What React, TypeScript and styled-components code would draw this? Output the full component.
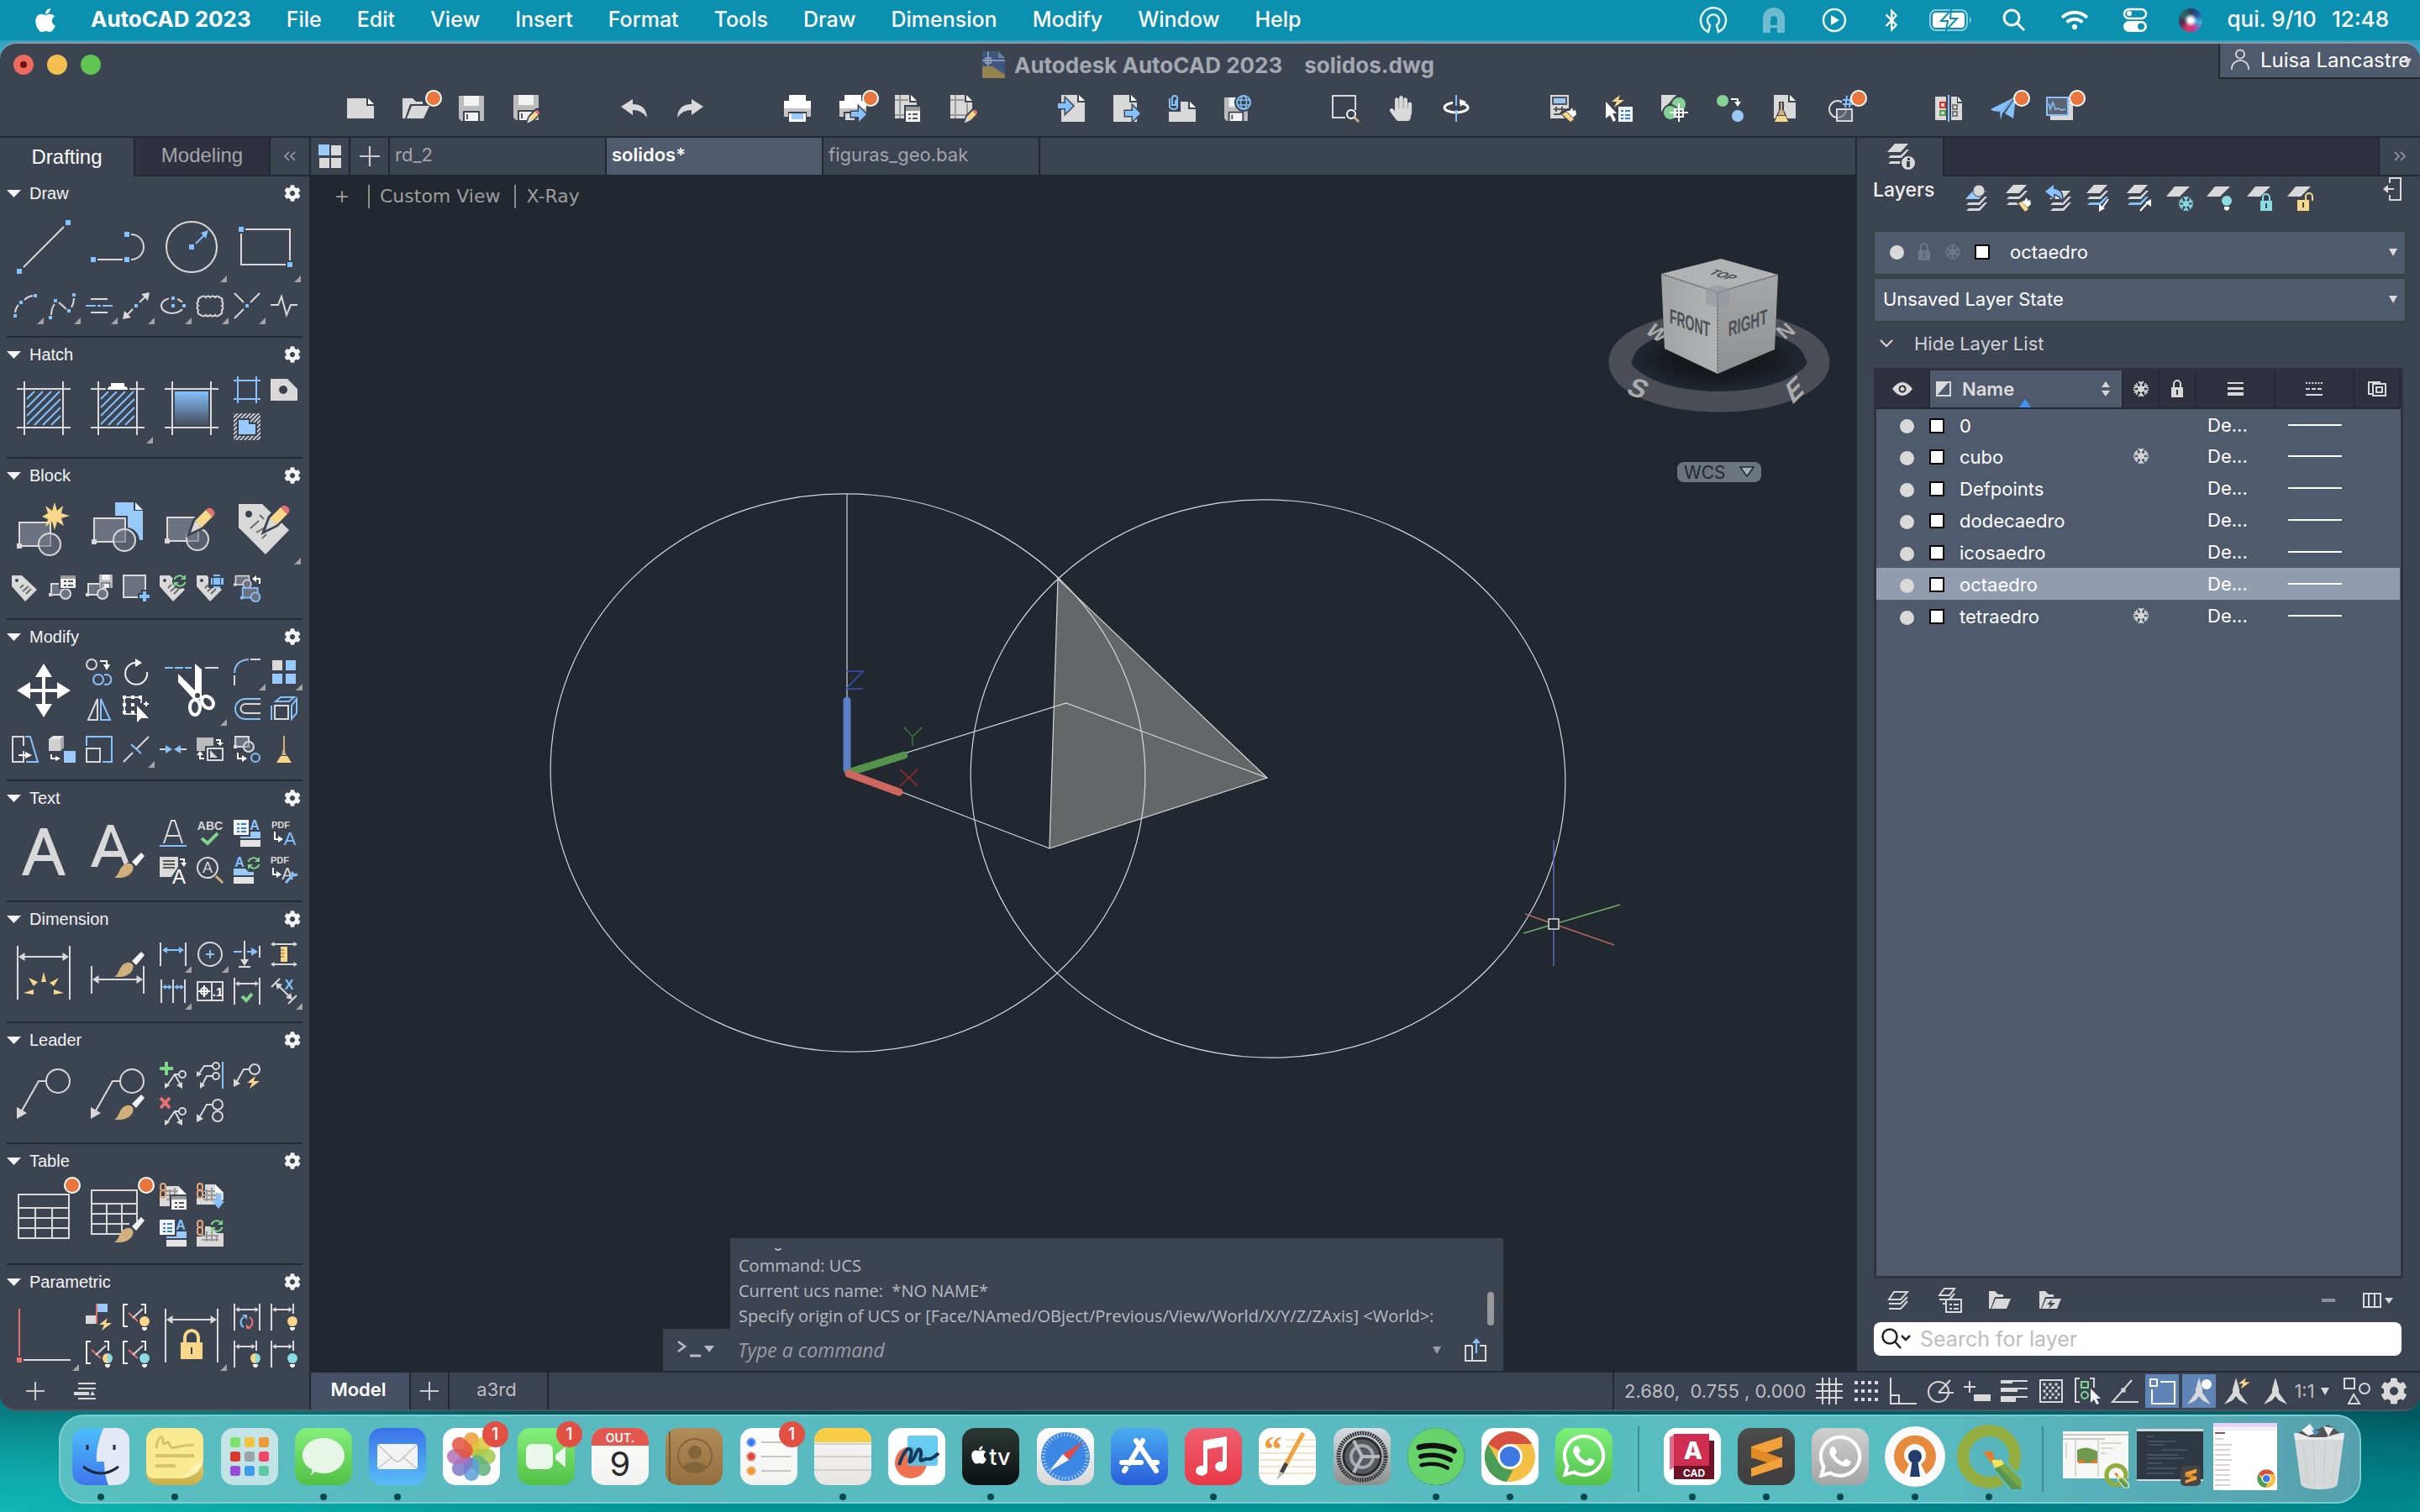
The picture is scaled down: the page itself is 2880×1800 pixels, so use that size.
import React from "react";
import styled, { createGlobalStyle, css } from "styled-components";
import { FaApple, FaSpotify, FaWhatsapp, FaBluetoothB, FaWifi, FaCog, FaHandPaper } from "react-icons/fa";

const W = "#d9d9d9";
const B = "#85c1fb";
const SKY = "#98c9f8";
const Y = "#f8d68a";
const G = "#7fd58b";
const R = "#e57070";
const T = "#8adbe2";
const TAN = "#d2b07c";
const PANEL = "#3c4452";
const FIELD = "#4f5a6d";
const DARK = "#2f323e";
const LINE = "#222831";
const UI = `Inter, "Noto Sans", sans-serif`;
const HELV = `"Liberation Sans", Arial, sans-serif`;
const CMD = `"Open Sans", "Noto Sans", sans-serif`;

const Global = createGlobalStyle`
  * { box-sizing: border-box; }
  body { margin: 0; background: #03868c; }
  button, input, select { font: inherit; color: inherit; border: 0; margin: 0; padding: 0; background: none; }
  svg { display: block; }
`;

/* ---------- drawing helpers ---------- */
type Pt = { c?: string; d: string; w?: number };
const F = ({ c = W, d }: Pt) => <path d={d} fill={c} stroke="none" />;
const L = ({ c = W, d, w = 2 }: Pt) => <path d={d} fill="none" stroke={c} strokeWidth={w} />;
const O = ({ x, y, r, c = W, f = "none", w = 2 }: { x: number; y: number; r: number; c?: string; f?: string; w?: number }) => (
  <circle cx={x} cy={y} r={r} fill={f} stroke={c} strokeWidth={w} />
);
const Sq = ({ x, y, s = 6, c = B }: { x: number; y: number; s?: number; c?: string }) => (
  <rect x={x - s / 2} y={y - s / 2} width={s} height={s} fill={c} />
);
const S = ({ s = 32, children }: { s?: number; children: React.ReactNode }) => (
  <svg width={s} height={s} viewBox={`0 0 ${s} ${s}`} overflow="visible" aria-hidden="true">{children}</svg>
);
const At = ({ x, y, k = 1, children }: { x: number; y: number; k?: number; children: React.ReactNode }) => (
  <g transform={`translate(${x} ${y}) scale(${k})`}>{children}</g>
);
const Brush = () => (
  <>
    <F c={TAN} d="M28 63C35 59 33 49 43 46C49 45 53 50 49 56C44 63 37 63 28 63z" />
    <F c="#f2f2f2" d="M49 44L60 33L64 37L54 49z" />
  </>
);
const Pencil = () => (
  <>
    <path d="M30 37L36 21L50 6A6 6 0 0 1 59 15L44 30z" fill="none" stroke={PANEL} strokeWidth={5} />
    <F c={Y} d="M36 22L49 9L57 17L44 30z" />
    <F d="M36 22L44 30L31 36z" />
    <F c={R} d="M50 8A6 6 0 0 1 59 15L57 17L49 9z" />
  </>
);
const Bulb = ({ x, y, a = Y, b = a }: { x: number; y: number; a?: string; b?: string }) => (
  <>
    <circle cx={x} cy={y} r={8} fill={PANEL} />
    <path d={`M${x} ${y - 6}a6 6 0 0 0 0 12z`} fill={a} />
    <path d={`M${x} ${y - 6}a6 6 0 0 1 0 12z`} fill={b} />
    <path d={`M${x - 3} ${y + 7}h6v2l-2 2h-2l-2 -2z`} fill="#fff" />
  </>
);
const Bolt = ({ x, y, k = 1 }: { x: number; y: number; k?: number }) => (
  <At x={x} y={y} k={k}><F c={Y} d="M10 0L0 8H6L3 15L15 6H8z" /></At>
);
const Cycle = ({ x, y, a = G, b = G }: { x: number; y: number; a?: string; b?: string }) => (
  <At x={x} y={y}>
    <L c={a} d="M1.500 6A6.500 6.500 0 0 1 12 3" /><F c={a} d="M15 0V6H9z" />
    <L c={b} d="M14.500 9A6.500 6.500 0 0 1 4 12" /><F c={b} d="M1 15V9H7z" />
  </At>
);
const Doc = ({ x, y, w, h, c = W }: { x: number; y: number; w: number; h: number; c?: string }) => (
  <>
    <F c={c} d={`M${x} ${y}h${w - 9}v9h9v${h - 9}h${-w}z`} />
    <F c="#fff" d={`M${x + w - 7} ${y}l7 7h-7z`} />
  </>
);
const Floppy = () => (
  <>
    <F c="#bcbcbc" d="M0 0H30V30H3L0 27z" />
    <F c="#f2f2f2" d="M6 0H24V12H6z" />
    <F c={PANEL} d="M5 18H25V30H5z" />
    <F c="#f2f2f2" d="M7 20H23V30H7z" /><F c="#555" d="M9 22h2v6h-2z" />
  </>
);
const Snow = ({ s = 20, c = W }: { s?: number; c?: string }) => (
  <svg width={s} height={s} viewBox="0 0 20 20" fill="none" stroke={c} strokeWidth="1.600" aria-hidden="true">
    <path d="M10 1V19M2 5.500L18 14.500M18 5.500L2 14.500M7 1L10 5L13 1M7 19L10 15L13 19M1 9L5.700 7.500L4.500 3M19 11L14.300 12.500L15.500 17M19 9L14.300 7.500L15.500 3M1 11L5.700 12.500L4.500 17M10 6.500L13 8.300V11.700L10 13.500L7 11.700V8.300z" />
  </svg>
);
const Padlock = ({ c = W, hole = DARK }: { c?: string; hole?: string }) => (
  <svg width="16" height="22" viewBox="0 0 16 22" aria-hidden="true">
    <path d="M4 10V5a4 4 0 0 1 8 0v5" fill="none" stroke={c} strokeWidth="2" />
    <rect x="1" y="9" width="14" height="12" fill={c} /><rect x="7" y="12" width="2" height="6" fill={hole} />
  </svg>
);
const Hatch = () => (
  <L c={B} d="M12 21L21 12M12 31L31 12M12 41L41 12M12 51L51 12M21 52L52 21M31 52L52 31M41 52L52 41" w={2} />
);
const Frame = () => <L d="M0 9H64M0 55H64M9 0V64M55 0V64" />;
const BlockBase = () => (
  <>
    <rect x="3" y="24" width="37" height="28" fill="#6d7280" stroke={W} strokeWidth="2" />
    <Sq x={3} y={52} c={W} />
    <circle cx="39" cy="50" r="13" fill="#6d7280" fillOpacity=".6" stroke={W} strokeWidth="2" />
  </>
);
const BlockSmall = ({ c = W, x = 2, y = 10 }: { c?: string; x?: number; y?: number }) => (
  <At x={x} y={y}>
    <rect x="1" y="1" width="20" height="13" fill="#6d7280" stroke={c} strokeWidth="2" />
    <Sq x={0} y={14} s={4} c={c} />
    <circle cx="18" cy="13" r="6" fill="#6d7280" stroke={c} strokeWidth="2" />
  </At>
);
const Tag = () => (
  <>
    <F d="M0 1H12L30 18L16 32L0 14z" />
    <circle cx="6" cy="7" r="2" fill={PANEL} />
    <L c="#6b6b6b" d="M10 16L14 12M13 20L20 14M17 23L23 17" />
  </>
);
const Lines = ({ x, y, c = "#555" }: { x: number; y: number; c?: string }) => (
  <L c={c} d={`M${x} ${y}h3M${x + 5} ${y}h6M${x} ${y + 5}h3M${x + 5} ${y + 5}h6`} />
);
const Chain = () => (
  <>
    <rect x="1" y="1" width="6" height="8" rx="3" fill="none" stroke="#e3a67a" strokeWidth="2" />
    <rect x="1" y="9" width="6" height="9" rx="3" fill="none" stroke="#e3a67a" strokeWidth="2" />
  </>
);
const GridMini = () => <L c="#9a9a9a" d="M8 10H26M8 15H26M8 20H26M12 8V22M18 6V22M24 6V22" />;
const DimH = ({ x1, x2, y, c = W, k = 4 }: { x1: number; x2: number; y: number; c?: string; k?: number }) => (
  <>
    <L c={c} d={`M${x1 + 2} ${y}H${x2 - 2}`} />
    <F c={c} d={`M${x1} ${y}l${k * 1.5} ${-k}v${2 * k}zM${x2} ${y}l${-k * 1.5} ${-k}v${2 * k}z`} />
  </>
);
const Txt = ({ x, y, z, c = W, w = 400, children }: { x: number; y: number; z: number; c?: string; w?: number; children: string }) => (
  <text x={x} y={y} fontSize={z} fill={c} fontWeight={w} fontFamily={HELV} textAnchor="middle">{children}</text>
);
const Leader = ({ r = 14 }: { r?: number }) => (
  <>
    <O x={49} y={17} r={r} /><L d="M34 17H26L5 54" /><F d="M0 48V62L12 55z" />
  </>
);
const LeaderMini = () => (
  <>
    <O x={27} y={15} r={4} /><L d="M23 15H18L9 28M18 15L25 28" />
    <F d="M6 25V32L12 28zM27 24V32L20 28z" />
  </>
);
const Bracket = () => (
  <>
    <L c="#f2f2f2" d="M6 1H1V27H6M22 1H27V12" /><L c={R} d="M7 11L18 21" /><L d="M12 17L24 6" />
  </>
);
const Stack = ({ top = W, low = W }: { top?: string; low?: string }) => (
  <>
    <F c={top} d="M10 0H26L17 10H1z" />
    <F c={W} d="M24 7H27L18 17H2L5 14H17z" />
    <F c={low} d="M24 14H27L18 24H2L5 21H17z" />
  </>
);
const Para = () => <F d="M10 2H28L16 14H0z" />;

type Tool = { n: string; i: React.ReactNode; big?: boolean; menu?: boolean; badge?: boolean; col?: number };

/* ---------- tool palettes ---------- */
const draw1: Tool[] = [
  { n: "Line", big: true, i: <S s={64}><L d="M8 56L56 8" /><Sq x={3} y={61} /><Sq x={61} y={3} /></S> },
  { n: "Polyline", big: true, i: <S s={64}><L d="M8 47H38M48 17A15 15 0 0 1 48 47" /><Sq x={3} y={47} /><Sq x={43} y={47} /><Sq x={43} y={17} /></S> },
  { n: "Circle", big: true, menu: true, i: <S s={64}><O x={32} y={32} r={30} /><Sq x={32} y={32} /><L c={B} d="M37 28L47 18" /><F c={B} d="M52 12L49 22L43 15z" /></S> },
  { n: "Rectangle", big: true, menu: true, i: <S s={64}><L d="M8 11H61V48M3 16V53H56" /><Sq x={3} y={11} /><Sq x={61} y={53} /></S> },
];
const draw2: Tool[] = [
  { n: "Arc", menu: true, i: <S><L d="M4 24Q5 18 8 15M15 9Q19 5 25 4" /><Sq x={4} y={28} s={4} /><Sq x={11} y={12} s={4} /><Sq x={28} y={4} s={4} /></S> },
  { n: "Spline", menu: true, i: <S><L d="M3 27Q3 19 7 14M12 12L21 20M27 18Q30 13 30 7" /><Sq x={2} y={30} s={4} /><Sq x={8} y={10} s={4} /><Sq x={24} y={22} s={4} /><Sq x={30} y={3} s={4} /></S> },
  { n: "Multiline", menu: true, i: <S><L d="M6 8H26M6 24H26" /><L c={B} d="M0 16H12M14 16H18M20 16H32" /></S> },
  { n: "Construction line", menu: true, i: <S><L d="M4 28L12 20M20 12L28 4" /><F d="M0 32L2 22L10 30zM32 0L30 10L22 2z" /><Sq x={16} y={16} s={4} /></S> },
  { n: "Ellipse", menu: true, i: <S><ellipse cx="15" cy="16" rx="13" ry="9" fill="none" stroke={W} strokeWidth="2" /><rect x="11" y="4" width="10" height="6" fill={PANEL} /><rect x="25" y="12" width="6" height="8" fill={PANEL} /><Sq x={16} y={7} s={4} /><Sq x={16} y={16} s={4} /><Sq x={29} y={16} s={4} /></S> },
  { n: "Revision cloud", menu: true, i: <S><L d="M5 6q3 -3 6 0q3 -3 5 0q3 -3 6 0q3 -3 5 0q5 1 3 5q3 3 0 5q3 3 0 5q1 5 -3 6q-3 3 -5 0q-3 3 -6 0q-3 3 -5 0q-3 3 -6 0q-5 -1 -3 -6q-3 -3 0 -5q-3 -3 0 -5q-1 -4 3 -5z" /></S> },
  { n: "Ray", menu: true, i: <S><L d="M1 1L12 12M31 1L20 12M1 31L12 20" /><Sq x={16} y={16} s={4} /></S> },
  { n: "Break symbol", i: <S><L d="M0 15H9L13 5L19 27L24 15H32" /></S> },
];
const hatch: Tool[] = [
  { n: "Hatch", big: true, i: <S s={64}><Hatch /><Frame /></S> },
  { n: "Hatch edit", big: true, menu: true, i: <S s={64}><Hatch /><Frame /><F c={PANEL} d="M18 4H46V12H18z" /><F c="#fff" d="M24 2H40V6Q44 6 44 10H20Q20 6 24 6z" /></S> },
  { n: "Gradient", big: true, i: <S s={64}><defs><linearGradient id="fade" x2="0" y2="1"><stop stopColor="#84c0fb" /><stop offset="1" stopColor="#474f5e" /></linearGradient></defs><rect x="12" y="12" width="40" height="40" fill="url(#fade)" /><Frame /></S> },
  { n: "Boundary", i: <S><L c={B} d="M0 5H32M0 27H32M5 0V32M27 0V32" /></S> },
  { n: "Wipeout", i: <S><path fillRule="evenodd" d="M0 3H20L32 15V29H0zM15 11a5 5 0 1 0 .1 0z" fill={W} /></S> },
  { n: "Region", i: <S><defs><pattern id="stripes" width="5" height="5" patternUnits="userSpaceOnUse"><path d="M-1 1L1 -1M0 5L5 0M4 6L6 4" stroke={W} strokeWidth="1.600" /></pattern></defs><path d="M0 0H32V32H0z" fill="url(#stripes)" /><F c={PANEL} d="M4 6H20V11H28V27H4z" /><F c={SKY} d="M6 8H18V13H26V25H6z" /></S> },
];
const block1: Tool[] = [
  { n: "Create block", big: true, i: <S s={64}><BlockBase /><F c={Y} d="M45 0L48 10L55 4L53 13L63 16L53 19L56 28L48 23L45 33L42 23L34 29L37 20L30 17L37 13L34 4L42 10z" /></S> },
  { n: "Insert block", big: true, i: <S s={64}><F c={SKY} d="M29 0H51V10H62V45H58Q56 32 44 30V16H29z" /><F c="#dff0ff" d="M53 0L62 9H53z" /><At x={1} y={-5}><BlockBase /></At></S> },
  { n: "Edit block", big: true, i: <S s={64}><At x={0} y={-6}><BlockBase /></At><Pencil /></S> },
  { n: "Edit attributes", big: true, menu: true, i: <S s={64}><F d="M0 2H28L60 33L32 62L0 30z" /><circle cx="12" cy="14" r="4" fill={PANEL} /><L c="#6b6b6b" d="M25 15L30 20M14 31L24 22M21 36L38 26M28 43L33 38" /><At x={1} y={-3}><Pencil /></At></S> },
];
const block2: Tool[] = [
  { n: "Define attributes", i: <S><Tag /></S> },
  { n: "Block palette", i: <S><BlockSmall /><F c={PANEL} d="M12 0H32V17H12z" /><F c="#f2f2f2" d="M14 1H32V16H14z" /><F c="#9a9a9a" d="M14 1H32V5H14z" /><Lines x={18} y={8} /></S> },
  { n: "Write block", i: <S><BlockSmall /><At x={16} y={0} k={0.53}><Floppy /></At></S> },
  { n: "Set base point", i: <S><rect x="1" y="1" width="26" height="26" fill="#6d7280" stroke={W} strokeWidth="2" /><L c={PANEL} d="M26 18V32M18 26H32" w={8} /><L c={B} d="M26 20V32M20 26H32" w={4} /></S> },
  { n: "Synchronize attributes", i: <S><Tag /><circle cx="24" cy="8" r="9" fill={PANEL} /><Cycle x={16} y={0} /></S> },
  { n: "Attribute manager", i: <S><Tag /><F c={PANEL} d="M14 0H32V16H14z" /><F c={B} d="M20 4h8v8h-8zM17 4h2v8h-2zM29 4h3v8h-3zM20 0h8v2h-8zM20 14h8v2h-8z" /></S> },
  { n: "Replace block", i: <S><At x={0} y={0} k={0.8}><BlockSmall y={1} /></At><L c="#fff" d="M31 11V5H26" /><F c="#fff" d="M22 5L27 1V9z" /><At x={8} y={15} k={0.9}><BlockSmall c={B} y={0} /></At></S> },
];
const modify1: Tool[] = [
  { n: "Move", big: true, i: <S s={64}><L c="#fff" d="M32 10V54M10 32H54" w={4} /><F c="#fff" d="M32 0L42 16H22zM32 64L42 48H22zM0 32L16 22V42zM64 32L48 22V42z" /></S> },
  { n: "Copy", i: <S><O x={7} y={7} r={6} /><O x={15} y={25} r={6} c={B} /><L c={B} d="M22 19.500A6 6 0 1 1 22 30.500" /><L c="#fff" d="M17 3H25V9" /><F c="#fff" d="M21 7H29L25 14z" /></S> },
  { n: "Rotate", i: <S><L d="M18 5A13 13 0 1 0 29 16" c="#f2f2f2" /><F c="#fff" d="M15 0L23 5L15 10z" /></S> },
  { n: "Trim", big: true, menu: true, i: <S s={64}><L c={B} d="M0 5H10M12 5H22M24 5H32" /><L d="M48 5H64" /><F c="#fff" d="M36 0L44 7V40H36zM16 12L44 40L38 46L16 22z" /><g transform="rotate(-40 51 46)"><ellipse cx="51" cy="46" rx="6" ry="8" fill="none" stroke="#fff" strokeWidth="4" /></g><ellipse cx="36" cy="52" rx="6" ry="9" fill="none" stroke="#fff" strokeWidth="4" /><circle cx="39" cy="38" r="3" fill={PANEL} /></S> },
  { n: "Fillet", menu: true, i: <S><L c={B} d="M1 17Q2 2 18 1" /><L d="M1 20V32M20 1H32" /></S> },
  { n: "Array", menu: true, i: <S><Sq x={8} y={8} s={12} c={W} /><Sq x={24} y={8} s={12} c={SKY} /><Sq x={8} y={24} s={12} c={SKY} /><Sq x={24} y={24} s={12} c={SKY} /></S> },
  { n: "Mirror", i: <S><L d="M14 4V29H3z" /><L c={B} d="M18 4V29H29z" /></S> },
  { n: "Stretch", i: <S><L d="M2 2H22V22H2z" w={2} /><Sq x={2} y={2} s={4} c="#fff" /><Sq x={12} y={2} s={4} c="#fff" /><Sq x={21} y={2} s={4} c="#fff" /><Sq x={2} y={11} s={4} c="#fff" /><Sq x={12} y={11} s={4} c="#fff" /><Sq x={2} y={20} s={4} c="#fff" /><Sq x={12} y={20} s={4} c="#fff" /><F c={PANEL} d="M15 9H25V22H15z" /><F c="#fff" d="M17 12V32L22 27H31z" /><L c="#fff" d="M28 7V13M25 10H31" /></S> },
  { n: "Offset", i: <S><L c={B} d="M32 4H14A11 11 0 0 0 14 28H32" /><L d="M32 10H14A5 5 0 0 0 14 21H32" /></S> },
  { n: "Explode", i: <S><L d="M5 12H21V28H5z" /><L c={B} d="M1 12V29M6 7L12 2H28L22 7zM25 28V12L31 4V21z" /></S> },
];
const modify2: Tool[] = [
  { n: "Stretch edge", i: <S><L d="M14 18V31H1V1H14V12" /><L c={B} d="M16 1H22L31 31H17" /><L c="#fff" d="M8 23H18" /><F c="#fff" d="M16 19L24 23L16 27z" /></S> },
  { n: "Convert", i: <S><F c="#e6e6e6" d="M0 4L5 0H18L14 4z" /><F c="#d0d0d0" d="M0 4H14V18H0z" /><F c="#aaa" d="M14 4L18 0V14L14 18z" /><Sq x={25} y={25} s={14} c={SKY} /><L c="#fff" d="M3 22V27H9" /><F c="#fff" d="M8 24L14 27L8 30z" /></S> },
  { n: "Scale", i: <S><L d="M1 15H17V31H1z" /><L c={B} d="M1 12V1H31V31H20" /></S> },
  { n: "Break", menu: true, i: <S><L d="M1 31L12 20M16 16L31 1" /><L c={B} d="M10 10L22 21" /></S> },
  { n: "Join", i: <S><L d="M0 16H8M24 16H32" /><F c={B} d="M7 11L15 16L7 21zM25 11L17 16L25 21z" /></S> },
  { n: "Draw order", i: <S><F c="#bcbcbc" d="M0 2H20V12H10V18H0z" /><L d="M13 15H31V29H13z" /><F d="M16 17V26H25z" /><L c="#fff" d="M23 5H28V9M9 27H4V22" /><F c="#fff" d="M24 8H32L28 12zM0 23H8L4 18z" /></S> },
  { n: "Copy nested", i: <S><rect x="2" y="1" width="16" height="12" fill="#6d7280" stroke={W} strokeWidth="2" /><circle cx="18" cy="13" r="6" fill="#6d7280" fillOpacity=".5" stroke={W} strokeWidth="2" /><Sq x={2} y={13} s={4} c={W} /><O x={26} y={26} r={5} c={B} /><L c="#fff" d="M5 20V27H11" /><F c="#fff" d="M10 23L16 27L10 31z" /></S> },
  { n: "Purge", i: <S><L c={TAN} d="M16 0V20" /><F c={TAN} d="M15 16L19 23H13z" /><F c={Y} d="M12 24H20L25 32H7z" /></S> },
];
const text1: Tool[] = [
  { n: "Multiline text", big: true, i: <S s={64}><path fillRule="evenodd" d="M6 60L28 4H36L58 60H50L43 43H21L14 60zM24 36H40L32 14z" fill={W} /></S> },
  { n: "Text style", big: true, i: <S s={64}><path fillRule="evenodd" d="M0 50L20 0H27L45 44L40 48L36 38H13L8 50zM16 31H33L24 8z" fill={W} /><Brush /></S> },
  { n: "Single line text", i: <S><L d="M5 28L14 1H18L27 28M9 19H23" w={2} /><L c={B} d="M0 31H32" /></S> },
  { n: "Spell check", i: <S><Txt x={16} y={12} z={14} w={700}>ABC</Txt><L c={G} d="M6 22L13 28L25 16" w={4} /></S> },
  { n: "Table text style", i: <S><F c="#f2f2f2" d="M0 0H18V18H0z" /><Lines x={4} y={5} c="#2f7fd6" /><L c="#2f7fd6" d="M4 14h3M9 14h6" /><F c={SKY} d="M20 14H32V22H8V20H20z" /><F c="#e4e4e4" d="M8 24H32V32H8z" /><Txt x={25} y={12} z={16} w={700} c={B}>A</Txt></S> },
  { n: "Import PDF text", i: <S><Txt x={12} y={10} z={11} w={700}>PDF</Txt><L c="#fff" d="M5 14V23H10" /><F c="#fff" d="M9 19L15 23L9 27z" /><Txt x={23} y={30} z={22} c={B}>A</Txt></S> },
  { n: "Convert to mtext", i: <S><F d="M0 0H22V12L14 24H0z" /><L c="#555" d="M4 5H18M4 9H18M4 13H18" /><L c="#fff" d="M24 3H29V8" /><F c="#fff" d="M25 7H32L29 12z" /><Txt x={23} y={32} z={24} c="#fff">A</Txt></S> },
  { n: "Find text", i: <S><O x={13} y={13} r={12} /><Txt x={13} y={19} z={18}>A</Txt><L c={TAN} d="M23 23L31 31" w={3} /></S> },
  { n: "Update text", i: <S><Txt x={7} y={12} z={16} w={700} c={B}>A</Txt><F c={SKY} d="M0 14H14L18 18H24V22H0z" /><F c="#e4e4e4" d="M0 24H24V32H0z" /><Cycle x={16} y={0} /></S> },
  { n: "PDF settings", i: <S><Txt x={11} y={8} z={11} w={700}>PDF</Txt><L c="#fff" d="M3 13V21H8" /><F c="#fff" d="M7 17L13 21L7 25z" /><Txt x={20} y={27} z={20}>A</Txt><L c={B} d="M18 31L28 20M25 18L28 22L32 21" w={3} /></S> },
];
const dim1: Tool[] = [
  { n: "Dimension", big: true, i: <S s={64}><L d="M1 0V64M63 0V64" /><DimH x1={2} x2={62} y={13} k={5} /><F c={Y} d="M32 31L35 43H29zM14 38L25 43L20 48zM50 38L44 48L39 44zM8 56L20 52V58zM56 56L44 52V58z" /></S> },
  { n: "Dimension style", big: true, i: <S s={64}><At x={0} y={-14}><L d="M1 38V71M63 38V71" /><DimH x1={2} x2={62} y={54} k={5} /></At><At x={0} y={-26}><Brush /></At></S> },
  { n: "Linear", menu: true, i: <S><L d="M1 2V30M31 2V30" /><DimH c={B} x1={3} x2={29} y={11} /></S> },
  { n: "Radius", menu: true, i: <S><O x={16} y={16} r={14} /><L c={B} d="M16 11V21M11 16H21" /></S> },
  { n: "Ordinate", i: <S><L d="M13 0V24M6 31H20M31 6V20" /><F d="M8 22H18L13 30z" /><L c={B} d="M0 13H10M16 13H22" /><F c={B} d="M21 8L29 13L21 18z" /></S> },
  { n: "Adjust space", i: <S><DimH x1={0} x2={32} y={4} k={3} /><DimH x1={0} x2={32} y={28} k={3} /><F c={Y} d="M12 7H20V25H12z" /><L c="#6b5a30" d="M12 11h4M12 15h4M12 19h4" w={1} /></S> },
  { n: "Continue", menu: true, i: <S><L d="M2 2V30M16 2V30M30 2V30" /><DimH c={B} x1={3} x2={15} y={11} k={3} /><DimH c={B} x1={17} x2={29} y={11} k={3} /></S> },
  { n: "Tolerance", i: <S><L d="M1 5H31V27H1zM18 5V27" /><O x={9} y={16} r={4} c="#fff" /><L c="#fff" d="M9 9V23M2 16H16" /><Txt x={25} y={22} z={15} c="#fff" w={700}>.1</Txt></S> },
  { n: "Inspection", i: <S><L d="M1 0V32M31 0V32" /><DimH x1={2} x2={30} y={7} k={3} /><L c={G} d="M10 22L15 27L22 19" w={4} /></S> },
  { n: "Oblique", menu: true, i: <S><L d="M1 11L11 1M21 31L31 21M8 8L24 24" /><F d="M6 6L14 8L8 14zM26 26L18 24L24 18z" /><Txt x={22} y={14} z={16} w={700} c={B}>X</Txt></S> },
];
const leader1: Tool[] = [
  { n: "Multileader", big: true, i: <S s={64}><Leader /></S> },
  { n: "Leader style", big: true, i: <S s={64}><Leader /><Brush /></S> },
  { n: "Add leader", i: <S><L c={G} d="M8 0V16M0 8H16" w={4} /><LeaderMini /></S> },
  { n: "Align leaders", i: <S><O x={23} y={5} r={4} /><O x={23} y={17} r={4} /><L d="M19 5H9L3 14M19 17H12L7 27" /><F d="M0 11V18L6 15zM4 24V32L10 28z" /><L c={B} d="M31 0V32" /></S> },
  { n: "Quick leader", i: <S><O x={25} y={9} r={6} /><L d="M19 9H12L3 25" /><F d="M0 20V30L8 26z" /><Bolt x={16} y={17} /></S> },
  { n: "Remove leader", col: 5, i: <S><L c={R} d="M1 -1L12 11M12 -1L1 11" w={4} /><LeaderMini /></S> },
  { n: "Collect leaders", col: 6, i: <S><O x={25} y={7} r={6} /><O x={25} y={21} r={6} /><L d="M19 7H12L3 23" /><F d="M0 18V28L8 24z" /></S> },
];
const table1: Tool[] = [
  { n: "Table", big: true, badge: true, i: <S s={64}><L d="M2 8H62V60H2zM2 24H62M2 36H62M2 48H62M22 24V60M42 24V60" /></S> },
  { n: "Table style", big: true, badge: true, i: <S s={64}><L d="M55 40V3H1V55H36M1 19H55M1 31H55M1 43H46M19 19V55M37 19V52" /><At x={0} y={2}><Brush /></At></S> },
  { n: "Data link", i: <S><F d="M8 4H22L32 14V28H0V16H8z" /><GridMini /><F c="#fff" d="M22 4L32 14H22z" /><F c={PANEL} d="M12 14H32V32H12z" /><F c="#f2f2f2" d="M14 16H32V32H14z" /><F c="#9a9a9a" d="M14 16H32V20H14z" /><Lines x={18} y={24} /><Chain /></S> },
  { n: "Download link", i: <S><F d="M10 2H22L32 12V20L24 26H0V18H10z" /><GridMini /><Chain /><F c="#fff" d="M22 2L32 12H22z" /><F c={B} d="M23 13H29V22H33L26 31L19 22H23z" /></S> },
  { n: "Table list", col: 5, i: <S><F c="#f2f2f2" d="M0 0H18V18H0z" /><Lines x={4} y={5} c="#2f7fd6" /><L c="#2f7fd6" d="M4 14h3M9 14h6" /><F c={SKY} d="M20 14H32V22H8V20H20z" /><F c="#e4e4e4" d="M8 24H32V32H8z" /><Txt x={25} y={12} z={16} w={700} c={B}>A</Txt></S> },
  { n: "Update link", col: 6, i: <S><F d="M10 8H16L24 16H32V32H0V20H10z" /><L c="#9a9a9a" d="M6 19H26M6 24H26M12 14V26M18 14V26M24 18V26" /><Chain /><Cycle x={16} y={0} /></S> },
];
const param1: Tool[] = [
  { n: "Perpendicular", big: true, menu: true, i: <S s={64}><L c={R} d="M3 0V56" /><L d="M8 61H64" /><Sq x={3} y={61} c={R} /></S> },
  { n: "Auto constrain", i: <S><F d="M0 14H12V24H0z" /><F c={SKY} d="M14 0H26V10H14z" /><L c={R} d="M13 0V24" /><Bolt x={16} y={17} /></S> },
  { n: "Show constraints", i: <S><Bracket /><Bulb x={26} y={21} /></S> },
  { n: "Lock dimension", big: true, menu: true, i: <S s={64}><L d="M1 0V64M63 0V64" /><DimH x1={2} x2={62} y={13} k={5} /><L c={Y} d="M24 42V34A8 8 0 0 1 40 34V42" w={4} /><F c={Y} d="M19 40H45V60H19z" /><L c={PANEL} d="M32 46V54" /></S> },
  { n: "Convert dimension", i: <S><L d="M1 0V32M31 0V32" /><DimH x1={2} x2={30} y={7} k={3} /><L c={B} d="M12 28A7 7 0 0 1 12 16" /><F c={B} d="M10 13H16V19z" /><L c={R} d="M19 16A7 7 0 0 1 19 28" /><F c={R} d="M15 24V30H21z" /></S> },
  { n: "Show dynamic", i: <S><L d="M1 0V32M27 0V12" /><DimH x1={2} x2={26} y={7} k={3} /><Bulb x={26} y={21} /></S> },
  { n: "Show or hide", i: <S><Bracket /><Bulb x={26} y={21} b={T} /></S> },
  { n: "Hide all", i: <S><Bracket /><Bulb x={26} y={21} a={T} /></S> },
  { n: "Show or hide dynamic", i: <S><L d="M1 0V32M27 0V12" /><DimH x1={2} x2={26} y={7} k={3} /><Bulb x={26} y={21} b={T} /></S> },
  { n: "Hide dynamic", i: <S><L d="M1 0V32M27 0V12" /><DimH x1={2} x2={26} y={7} k={3} /><Bulb x={26} y={21} a={T} /></S> },
];
const sections: { t: string; rows: Tool[][] }[] = [
  { t: "Draw", rows: [draw1, draw2] },
  { t: "Hatch", rows: [hatch] },
  { t: "Block", rows: [block1, block2] },
  { t: "Modify", rows: [modify1, modify2] },
  { t: "Text", rows: [text1] },
  { t: "Dimension", rows: [dim1] },
  { t: "Leader", rows: [leader1] },
  { t: "Table", rows: [table1] },
  { t: "Parametric", rows: [param1] },
];

/* ---------- main toolbar ---------- */
const Printer = () => (
  <><F c="#fff" d="M6 0H26V10H6z" /><F c="#fff" d="M0 7H6V10H26V7H32V16H0z" /><F c="#c4c4c4" d="M0 16H32V26H0z" /></>
);
const Arrow = ({ x, y }: { x: number; y: number }) => (
  <At x={x} y={y}><path d="M0 6H9V0L18 9L9 18V12H0z" fill={B} stroke={PANEL} strokeWidth="3" paintOrder="stroke" /></At>
);
const tools: Tool[][] = [
  [
    { n: "New", i: <S><Doc x={0} y={4} w={32} h={24} /></S> },
    { n: "Open", badge: true, i: <S><F d="M0 4H12L16 8H24V11H9L3 28H0z" /><F d="M11 13H32L25 28H5z" /></S> },
    { n: "Save", i: <S><At x={1} y={1}><Floppy /></At></S> },
    { n: "Save as", i: <S><Floppy /><At x={0} y={15} k={0.52}><Pencil /></At></S> },
  ],
  [
    { n: "Undo", i: <S><F d="M0 14L14 5V11Q30 11 31 27Q25 18 14 18V24z" /></S> },
    { n: "Redo", i: <S><F d="M32 14L18 5V11Q2 11 1 27Q7 18 18 18V24z" /></S> },
  ],
  [
    { n: "Print", i: <S><Printer /><F c={PANEL} d="M5 20H27V32H5z" /><F c="#fff" d="M6 22H26V32H6z" /><F c={SKY} d="M9 22H23V29H9z" /></S> },
    { n: "Batch plot", badge: true, i: <S><Printer /><F c={PANEL} d="M5 20H27V26H5z" /><F c={W} d="M7 22H18V30H7z" /><Arrow x={14} y={14} /></S> },
    { n: "Page setup", i: <S><Doc x={0} y={0} w={26} h={28} /><L c="#999" d="M0 6H16M0 24H12M6 0V28" /><F c={PANEL} d="M11 12H32V32H11z" /><F c="#f2f2f2" d="M13 14H30V32H13z" /><F c="#9a9a9a" d="M13 14H30V19H13z" /><Lines x={16} y={23} /></S> },
    { n: "Plot style", i: <S><Doc x={0} y={0} w={26} h={28} /><L c="#999" d="M0 6H16M0 24H26M6 0V28M20 10V28" /><At x={0} y={14} k={0.54}><Pencil /></At></S> },
  ],
  [
    { n: "Import", i: <S><Doc x={4} y={0} w={28} h={32} /><Arrow x={0} y={4} /></S> },
    { n: "Export", i: <S><Doc x={0} y={0} w={28} h={32} /><Arrow x={14} y={13} /></S> },
    { n: "Attach", i: <S><Doc x={0} y={8} w={32} h={24} /><F c={PANEL} d="M0 6H14V20H0z" /><L c={B} d="M8 6V12H4V4Q4 1 7 1T10 4V14Q10 17 6 17T1 14V4" w={2} /></S> },
    { n: "Publish to web", i: <S><At x={0} y={3} k={0.93}><Floppy /></At><circle cx="23" cy="9" r="11" fill={PANEL} /><O x={23} y={9} r={8} c={B} /><ellipse cx="23" cy="9" rx="3.500" ry="8" fill="none" stroke={B} strokeWidth="1.5" /><L c={B} d="M15 6H31M15 12H31" w={1.5} /></S> },
  ],
  [
    { n: "Zoom", i: <S><L d="M16 27H1V1H28V18" /><O x={23} y={23} r={5} c="#fff" /><L c={TAN} d="M27 27L32 32" w={3} /></S> },
    { n: "Pan", i: <FaHandPaper size={30} color={W} aria-hidden /> },
    { n: "Orbit", i: <S><ellipse cx="16" cy="15" rx="14" ry="6" fill="none" stroke="#fff" strokeWidth="3" /><F c={PANEL} d="M12 6H20V14H12z" /><L c={B} d="M16 0V13M16 18V32" /><F c="#fff" d="M20 5L28 8L21 14z" /></S> },
  ],
  [
    { n: "Match properties", i: <S><F d="M0 0H22V28H0z" /><F c="#555" d="M2 2H20V12H2z" /><F c={SKY} d="M4 4H18V10H4z" /><L c="#555" d="M4 17H18M4 23H13M7 14V20M14 14V20" /><F c={PANEL} d="M11 21L20 16L31 14V32H21z" /><F c={Y} d="M14 23L19 20L28 29L24 32z" /><F c="#fff" d="M19 19L23 19L26 15L27 19L30 18L31 23L27 27z" /></S> },
    { n: "Quick select", i: <S><F c="#fff" d="M0 8V28L5 24L9 32L12 30L8 22H13z" /><Bolt x={7} y={0} /><F c="#f2f2f2" d="M15 14H32V32H15z" /><Lines x={18} y={19} c="#2f7fd6" /><L c="#2f7fd6" d="M18 28h3M23 28h6" /></S> },
    { n: "Reference manager", i: <S><F d="M0 0H18L0 20z" /><O x={21} y={11} r={9} c={PANEL} f="#86d295" /><O x={11} y={21} r={9} c={PANEL} f="#86d295" /><L c="#fff" d="M21 10V32M10 21H32M16 17H26V26H16z" /></S> },
    { n: "Replace", i: <S><circle cx="7" cy="7" r="7" fill="#86d295" /><circle cx="25" cy="25" r="7" fill={SKY} /><L c="#fff" d="M17 5H25V9" /><F c="#fff" d="M21 8H29L25 14z" /></S> },
    { n: "Clean", i: <S><Doc x={2} y={0} w={26} h={28} /><F c={PANEL} d="M8 8H14V18L20 32H2L8 18z" /><L c={TAN} d="M11 9V22" w={2} /><F c={TAN} d="M9 18H13L15 24H7z" /><F c={Y} d="M6 25H16L19 32H3z" /></S> },
    { n: "Count", badge: true, i: <S><O x={12} y={17} r={10} /><rect x="11" y="17" width="18" height="14" fill="#6d7280" fillOpacity=".6" stroke={W} strokeWidth="2" /><F c={PANEL} d="M17 0H32V16H17z" /><L c={B} d="M18 6H32M18 11H30M23 1L21 15M28 1L26 15" /></S> },
  ],
  [
    { n: "Compare drawings", i: <S><F d="M0 2H13V30H0zM19 2H26V10H32V30H19z" /><F c="#fff" d="M27 2L32 8H27z" /><L c={B} d="M16 0V32" /><L c="#e0322b" d="M6 9H12V15H6z" /><L c="#4fa34f" d="M6 19H12V24H6z" /><L c="#777" d="M21 12H26V17H21zM21 20H26V25H21z" /></S> },
    { n: "Share", badge: true, i: <S><F c={B} d="M0 17L30 2L12 20L3 19zM11 21L28 5L14 22L12 30z" /><F c={B} d="M30 3L27 28L17 22z" /></S> },
    { n: "Performance", badge: true, i: <S><F d="M5 8H32V30H5z" /><rect x="1" y="3" width="25" height="21" fill="#5c6373" stroke={B} strokeWidth="2" /><L c={B} d="M3 10L5 17L8 9L11 17L15 16L18 18L23 17" w={1.5} /></S> },
  ],
];
const layerTools: Tool[] = [
  { n: "Make current", i: <S><At x={0} y={7}><Stack top={SKY} /></At><circle cx="17" cy="7" r="7" fill={W} stroke={PANEL} strokeWidth="1" /></S> },
  { n: "Match layer", i: <S><Stack /><F c={PANEL} d="M13 20L21 14H32V32H22z" /><F c={Y} d="M16 22L20 20L28 29L24 32z" /><F c="#fff" d="M20 20L23 19L26 15L27 19L30 18L31 23L27 27z" /></S> },
  { n: "Previous layer", i: <S><At x={4} y={7}><Stack /></At><path d="M0 8L10 0V5Q21 6 20 18Q16 11 10 11V16z" fill={B} stroke={PANEL} strokeWidth="3" paintOrder="stroke" /></S> },
  { n: "Isolate layer", i: <S><Stack low={B} /><L c="#fff" d="M27 17L20 27" /><F c="#fff" d="M16 32V23L23 28z" /></S> },
  { n: "Unisolate layer", i: <S><Stack low={B} /><L c="#fff" d="M17 31L26 21" /><F c="#fff" d="M30 17V26L23 21z" /></S> },
  { n: "Freeze layer", i: <S><Para /><g transform="translate(14 13)"><Snow s={19} c={T} /></g></S> },
  { n: "Layer off", i: <S><Para /><circle cx="24" cy="19" r="6" fill={T} /><F c="#fff" d="M21 26H27V29L24 31L21 29z" /></S> },
  { n: "Lock layer", i: <S><Para /><g transform="translate(15 10)"><Padlock c={T} hole={PANEL} /></g></S> },
  { n: "Unlock layer", i: <S><Para /><F c={Y} d="M12 18H26V31H12z" /><L c={Y} d="M22 18V14A4 4 0 0 1 30 14V19" /><L c={PANEL} d="M19 21V27" /></S> },
];

/* ---------- layout parts ---------- */
const Desktop = styled.div`
  min-height: 100vh; display: flex; flex-direction: column; font-family: ${UI}; color: #fff;
  background:
    radial-gradient(ellipse 30% 12% at 0% 100%, #12b4b4, transparent),
    radial-gradient(ellipse 30% 10% at 85% 100%, #028087, transparent),
    linear-gradient(180deg, #0a7f9b 0, #3aa9c9 60px, #0a7f9b 8%, #02606a 90%, #004f56 93.5%, #006a70 96%, #009598 100%);
`;
const MenuBar = styled.header`
  height: 48px; display: flex; align-items: center; justify-content: space-between; padding: 0 37px 0 41px;
  background: #0b90b0; font-size: 25px; font-weight: 500;
`;
const Menus = styled.nav`display: flex; align-items: center; gap: 42px;`;
const MenuItem = styled.button<{ $bold?: boolean }>`font-size: ${(p) => (p.$bold ? 26 : 25)}px; font-weight: ${(p) => (p.$bold ? 700 : 500)}; line-height: 44px; padding-bottom: 2px;`;
const AppleItem = styled.button`width: 25px; display: flex; justify-content: center; svg { flex: none; }`;
const Extras = styled.div`display: flex; align-items: center;`;
const Extra = styled.button<{ $w?: number }>`
  width: ${(p) => p.$w ?? 72}px; height: 48px; display: grid; place-items: center;
`;
const Clock = styled.time`padding: 0 0 2px 14px; display: flex; gap: 18px; font-size: 26px; line-height: 44px; white-space: nowrap;`;
const Siri = styled.span`
  width: 28px; height: 28px; border-radius: 50%;
  background: radial-gradient(circle at 50% 50%, #fff 0 12%, transparent 40%), conic-gradient(#2c3d5c, #274e9b, #38b6d8, #c23a9a, #d9355b, #4a2b52, #2c6e6a, #2c3d5c);
`;
const Win = styled.main`
  flex: 1; min-height: 0; margin-top: 2px; display: flex; flex-direction: column; overflow: hidden;
  background: ${PANEL}; border-top: 2px solid #9096a2; border-bottom: 2px solid #505662; border-radius: 20px;
`;
const Head = styled.div`border-bottom: 2px solid ${LINE}; position: relative;`;
const TitleRow = styled.div`height: 46px; display: flex; align-items: center; padding: 6px 0 0 16px; position: relative;`;
const Lights = styled.div`display: flex; gap: 16px; flex: 1; padding-bottom: 2px;`;
const Light = styled.button<{ $c: string; $on?: boolean }>`
  width: 24px; height: 24px; border-radius: 50%; display: grid; place-items: center; background: ${(p) => p.$c};
  ${(p) => p.$on && css`&::after { content: ""; width: 8px; height: 8px; border-radius: 50%; background: #6d0f0a; }`}
`;
const WinTitle = styled.h1`
  margin: 0; padding: 0 22px 2px 0; display: flex; align-items: center; gap: 8px; font-size: 26px; font-weight: 700; color: #a4a8b0; white-space: nowrap;
  span { padding-left: 18px; }
`;
const Right = styled.div`flex: 1; display: flex; justify-content: flex-end; align-self: flex-start;`;
const User = styled.button`
  position: relative; display: flex; align-items: center; gap: 12px; width: 240px; height: 42px; margin-top: -6px; padding: 0 0 2px 12px;
  background: ${FIELD}; border-left: 2px solid ${LINE}; border-bottom: 2px solid ${LINE}; font-size: 24px; white-space: nowrap;
  > :last-child { position: absolute; right: 9px; top: 16px; }
`;
const ToolBar = styled.div`height: 64px; display: flex; justify-content: center; align-items: center; gap: 62px; padding-bottom: 2px;`;
const Group = styled.div`display: flex;`;
const ToolBtn = styled.button<{ $w?: number }>`
  position: relative; width: ${(p) => p.$w ?? 66}px; height: 44px; display: grid; place-items: center;
`;
const Badge = styled.i<{ $big?: boolean }>`
  position: absolute; top: ${(p) => (p.$big ? -1 : 0)}px; right: ${(p) => (p.$big ? 0 : 2)}px; width: 20px; height: 20px;
  border-radius: 50%; background: #e8763d; border: 2px solid #fff;
`;
const Body = styled.div`flex: 1; min-height: 0; display: flex;`;
const Side = styled.aside`width: 370px; flex: none; display: flex; flex-direction: column; border-right: 2px solid ${LINE}; overflow: hidden;`;
const SideTabs = styled.div`display: flex; height: 46px; flex: none; font: 24px ${HELV};`;
const SideTab = styled.button<{ $on?: boolean }>`
  flex: 1; padding-bottom: ${(p) => (p.$on ? 0 : 2)}px; color: ${(p) => (p.$on ? "#fff" : "#a3a5aa")}; background: ${(p) => (p.$on ? PANEL : DARK)};
  ${(p) => !p.$on && css`border: solid ${LINE}; border-width: 0 2px 2px;`}
`;
const Fold = styled.button`width: 46px; border-bottom: 2px solid ${LINE}; display: grid; place-items: center;`;
const Section = styled.section`
  flex: none; margin: 0 8px; padding-bottom: 14px; border-top: 2px solid ${LINE};
  &:first-of-type { border-top: 0; }
  &:last-of-type { padding-bottom: 0; }
`;
const SecHead = styled.h2`
  margin: 0; height: 40px; display: flex; align-items: center; gap: 10px; padding-right: 2px;
  font: 20px ${HELV}; color: #f4f4f4;
  > :last-child { margin-left: auto; }
`;
const Tools = styled.div`
  display: grid; grid-template-columns: repeat(8, 44px); grid-auto-rows: 44px; grid-auto-flow: dense;
  & + & { margin-top: 4px; }
`;
const Cell = styled.button<{ $big?: boolean; $menu?: boolean; $col?: number }>`
  position: relative; display: grid; place-items: center;
  ${(p) => p.$big && css`grid-column: span 2; grid-row: span 2;`}
  ${(p) => p.$col && css`grid-column: ${p.$col};`}
  ${(p) => p.$menu && css`&::after {
    content: ""; position: absolute; right: ${p.$big ? 2 : 0}px; bottom: ${p.$big ? 2 : 0}px; width: 8px; height: 8px;
    background: #a3a3a3; clip-path: polygon(100% 0, 100% 100%, 0 100%);
  }`}
`;
const SideFoot = styled.div`flex: 1; display: flex; align-items: center; gap: 34px; padding: 0 0 0 31px;`;
const Main = styled.div`flex: 1; min-width: 0; display: flex; flex-direction: column;`;
const Work = styled.div`flex: 1; min-height: 0; display: flex; border-bottom: 2px solid ${LINE};`;
const Center = styled.div`flex: 1; min-width: 0; display: flex; flex-direction: column;`;
const DocTabs = styled.div`height: 44px; display: flex; font-size: 22px; color: #a3a5aa;`;
const DocIcon = styled.button`width: 47px; display: grid; place-items: center; border-right: 2px solid ${LINE};`;
const DocTab = styled.button<{ $on?: boolean }>`
  width: 258px; padding: 0 0 4px 6px; text-align: left; border-right: 2px solid ${LINE};
  ${(p) => p.$on && css`background: ${FIELD}; color: #fff; font-weight: 600;`}
`;
const Canvas = styled.div`flex: 1; min-height: 0; position: relative; background: #222830; overflow: hidden;`;
const Scene = styled.svg`position: absolute; inset: 0; width: 100%; height: 100%;`;
const Cube = styled.svg`position: absolute; top: 82px; right: 18px; width: 290px; height: 210px;`;
const ViewBar = styled.div`
  position: absolute; top: 10px; left: 21px; display: flex; align-items: center; height: 32px;
  font: 22px "DejaVu Sans", sans-serif; color: #9d9d9b;
  button { line-height: 28px; }
  button + button { border-left: 2px solid #8d8d8b; padding-left: 12px; margin-left: 15px; }
  button + button + button { margin-left: 17px; }
  button:first-child { width: 32px; }
`;
const Wcs = styled.button`
  position: absolute; top: 342px; right: 112px; width: 100px; height: 24px; padding: 0 8px; display: flex; align-items: center;
  justify-content: space-between; border-radius: 8px; background: #6c757c; color: #222830; font-size: 21px;
`;
const Command = styled.div`
  position: absolute; bottom: 0; left: 50%; width: 1000px; margin-left: -500px; display: flex; flex-direction: column; align-items: flex-end;
  font: 20px ${CMD}; color: #b9bcc2;
`;
const History = styled.div`
  width: 920px; height: 108px; padding: 12px 10px 0; background: ${PANEL}; position: relative;
  p { margin: 0; line-height: 30px; white-space: pre; }
  p:first-of-type { margin-top: 3px; }
  svg { margin-left: 43px; }
`;
const Thumb = styled.i`position: absolute; right: 11px; bottom: 4px; width: 8px; height: 40px; border-radius: 4px; background: #979899;`;
const Prompt = styled.label`
  width: 100%; height: 50px; display: flex; align-items: center; gap: 27px; padding: 0 20px 0 16px; background: ${PANEL};
`;
const CmdInput = styled.input`
  flex: 1; outline: 0; font-style: italic; font-size: 23px;
  &::placeholder { color: #9a9ea7; opacity: 1; }
`;
const Layers = styled.aside`width: 672px; flex: none; display: flex; flex-direction: column; border-left: 2px solid ${LINE};`;
const LTabs = styled.div`
  display: flex; height: 46px; flex: none;
  > :first-child { width: 102px; display: grid; place-items: center; }
  > div { flex: 1; background: ${DARK}; border: solid ${LINE}; border-width: 0 2px 2px; }
  > :last-child { width: 48px; display: grid; place-items: center; border-bottom: 2px solid ${LINE}; }
`;
const LHead = styled.div`
  display: flex; align-items: center; height: 52px; margin-bottom: 12px; padding: 0 22px 0 19px;
  h2 { margin: 0; width: 101px; font-size: 23px; font-weight: 500; align-self: flex-start; line-height: 32px; color: #f0f0f0; }
  > :last-child { margin-left: auto; align-self: flex-start; }
`;
const Pick = styled.label`
  position: relative; display: flex; align-items: center; gap: 16px; height: 54px; margin: 0 16px 2px 19px; padding: 0 8px 2px 10px; border-radius: 4px;
  background: ${FIELD}; border: 2px solid #36443f; font-size: 22px;
  select { flex: 1; appearance: none; outline: 0; }
`;
const PickMarks = styled.span`display: flex; align-items: center; gap: 16px; padding: 0 8px;`;
const Dot = styled.i`display: inline-block; width: 17px; height: 17px; border-radius: 50%; background: #d9d9d9;`;
const Swatch = styled.i`display: inline-block; width: 18px; height: 18px; background: #fff; border: 2px solid #000; vertical-align: middle;`;
const Hide = styled.button`display: flex; align-items: center; gap: 25px; height: 52px; padding: 0 0 6px 27px; font-size: 22px; color: #d0d2d6;`;
const Box = styled.div`flex: 1; min-height: 0; margin: 0 20px; background: ${FIELD}; border: 3px solid ${DARK};`;
const LTable = styled.table`
  width: 100%; table-layout: fixed; border-collapse: collapse; font-size: 22px; text-align: left;
  th, td { padding: 0; }
  th { height: 45px; background: ${DARK}; border-right: 2px solid #262934; border-bottom: 2px solid ${LINE}; }
  th svg { margin: 0 auto; }
  td svg { margin: 0 auto; }
  td { height: 38px; line-height: 1; }
`;
const Col = styled.col<{ $w: number }>`width: ${(p) => p.$w}px;`;
const NameHead = styled.th`
  && { background: ${FIELD}; }
  position: relative; color: #dcdcdc; font-weight: 600;
  div { display: flex; align-items: center; gap: 13px; padding: 0 14px 0 7px; }
  div svg { margin: 0; }
  div svg:last-child { margin-left: auto; }
  > svg { position: absolute; bottom: 0; left: 106px; }
`;
const Row = styled.tr<{ $on?: boolean }>`background: ${(p) => (p.$on ? "#919dae" : "transparent")};`;
const VisCell = styled.td`&& { padding-left: 28px; } i { vertical-align: middle; }`;
const NameCell = styled.td`span { vertical-align: middle; margin-left: 18px; }`;
const WeightCell = styled.td`&& { padding-left: 14px; }`;
const Rule = styled.i`display: block; width: 64px; height: 2px; margin-left: 16px; background: #fff;`;
const LFoot = styled.div`
  display: flex; align-items: center; gap: 28px; height: 52px; padding: 0 32px 0 34px;
  > :nth-child(5) { margin-left: auto; margin-right: 5px; }
`;
const Search = styled.label`
  display: flex; align-items: center; gap: 11px; height: 40px; margin: 0 22px 18px 20px; padding: 0 8px; border-radius: 8px; background: #fff; font-size: 25px; color: #222;
  input { flex: 1; outline: 0; }
  input::placeholder { color: #bdbdbd; opacity: 1; }
`;
const Status = styled.footer`
  height: 44px; flex: none; display: flex; align-items: stretch; padding-right: 8px; font-size: 22px; color: #bcbec2; background: #3b4251;
`;
const ModelTab = styled.button<{ $on?: boolean; $w: number }>`
  width: ${(p) => p.$w}px; border-right: 2px solid ${LINE}; display: grid; place-items: center; padding: 0 4px 4px 0;
  ${(p) => p.$on && css`background: #465064; color: #fff; font-weight: 600;`}
`;
const AddTab = styled.button`width: 46px; border-right: 2px solid ${LINE}; display: grid; place-items: center;`;
const Coords = styled.output`
  margin-left: auto; border-left: 2px solid ${LINE}; padding-left: 12px; width: 236px; line-height: 44px; white-space: pre; font-family: ${UI};
`;
const StatBtn = styled.button<{ $on?: boolean; $w?: number }>`
  width: ${(p) => p.$w ?? 40}px; margin: 2px; display: flex; align-items: center; justify-content: center; gap: 6px; white-space: nowrap;
  background: ${(p) => (p.$on ? "#5f85b6" : "none")};
`;
const Dock = styled.nav`
  height: 106px; flex: none; margin: 4px 70px 10px; padding: 0 4px; display: flex; align-items: stretch; border-radius: 30px;
  background: linear-gradient(90deg, #59bfc0, #59b9bf 20%, #58bcc1 80%, #56a0ae); border: 2px solid #7ccdd0;
`;
const Launcher = styled.button<{ $run?: boolean }>`
  flex: 1; min-width: 0; position: relative; display: grid; place-items: center; padding-bottom: 6px;
  ${(p) => p.$run && css`&::after { content: ""; position: absolute; bottom: 2px; left: 50%; width: 8px; height: 8px; margin-left: -4px; border-radius: 50%; background: #05494e; }`}
`;
const Gap = styled.i`width: 2px; margin: 12px 19px; background: #3a8d96;`;
const Count = styled.b`
  position: absolute; top: 6px; right: 1px; width: 31px; height: 31px; border-radius: 50%; background: #e25044;
  font-size: 20px; line-height: 31px; font-weight: 500; text-align: center;
`;

/* ---------- dock ---------- */
const Tile = ({ a, b = a, id, children }: { a: string; b?: string; id: string; children?: React.ReactNode }) => (
  <svg width="68" height="68" viewBox="0 0 68 68" overflow="visible" aria-hidden="true">
    <defs>
      <linearGradient id={id} x2="0" y2="1"><stop stopColor={a} /><stop offset="1" stopColor={b} /></linearGradient>
      <clipPath id={id + "c"}><rect width="68" height="68" rx="15" /></clipPath>
    </defs>
    <g clipPath={`url(#${id}c)`}><rect width="68" height="68" fill={`url(#${id})`} />{children}</g>
  </svg>
);
const ChromeMark = () => (
  <g>
    <circle cx="34" cy="34" r="30" fill="#f3bf45" />
    <path d="M8 19A30 30 0 0 1 60 19H34A15 15 0 0 0 21 27z" fill="#d8503f" />
    <path d="M8 19L21 42A15 15 0 0 0 38 49L30 64A30 30 0 0 1 8 19z" fill="#4a9d57" />
    <circle cx="34" cy="34" r="15" fill="#fff" /><circle cx="34" cy="34" r="12" fill="#3d78e3" />
  </g>
);
const SublimeMark = () => (
  <><F c="#f3a13a" d="M16 22L53 10V23L16 36z" /><F c="#e08a25" d="M16 23L53 36V47L16 35z" /><F c="#f3a13a" d="M16 48L53 35V46L16 58z" /></>
);
const QMark = ({ gap = "#58bcc1" }: { gap?: string }) => (
  <>
    <circle cx="39" cy="38" r="31" fill="none" stroke="#93ad3f" strokeWidth="14" />
    <path d="M46 46H58L78 66V77H66L46 53z" fill="#7aa844" stroke={gap} strokeWidth="5" paintOrder="stroke" />
    <F c="#5b9450" d="M46 46V53L66 77H78z" />
    <F c="#e87a2c" d="M32 32H43L46 42L42 46z" /><F c="#f2e35c" d="M42 42H54L57 47L46 52z" />
  </>
);
const petals = ["#f09a37", "#d9c83a", "#a4c94a", "#5fb27c", "#5c9fd8", "#7b78c8", "#b56fb5", "#e2553f"];
const pads = ["#7be26a", "#f4c53a", "#ee9a35", "#d93a30", "#9aa3a8", "#ef4766", "#9a4bd8", "#3d9bf0", "#5cc9a4"];
type DockApp = { n: string; i: React.ReactNode; run?: boolean; count?: string };
const apps: DockApp[] = [
  { n: "Finder", run: true, i: <Tile id="fi" a="#4fbdfb" b="#3d76ec"><path d="M37 0C31 15 28 28 29 40H38C38 52 40 60 43 68H68V0z" fill="#e4eaf5" /><L c="#1d2a3a" w={3} d="M18 20V26M50 20V26M13 46Q34 62 55 46" /></Tile> },
  { n: "Stickies", run: true, i: <Tile id="st" a="#fbef9a" b="#c9b04a"><path d="M0 0H68V36Q66 58 40 60H10Q0 60 0 50z" fill="#f9ea92" /><path d="M68 36Q66 58 40 60Q56 50 56 44Q62 44 68 36z" fill="#fbf2b4" /><L c="#d9c36a" w={3} d="M12 24C14 8 20 8 20 16S26 12 28 20S34 20 57 20" /><L c="#d9c36a" w={4} d="M11 33H57M11 45H35" /></Tile> },
  { n: "Launchpad", i: <Tile id="lp" a="#c6e4e7" b="#bfe3e5">{pads.map((c, k) => <rect key={k} x={11 + (k % 3) * 17} y={11 + Math.floor(k / 3) * 17} width="12" height="12" rx="3" fill={c} />)}</Tile> },
  { n: "Messages", run: true, i: <Tile id="me" a="#84f07c" b="#52bf45"><path d="M34 12C48 12 59 21 59 33S48 54 34 54C30 54 27 53 24 52Q21 55 18 56Q21 53 20 49C13 46 9 40 9 33C9 21 20 12 34 12z" fill="#e8f6e8" /></Tile> },
  { n: "Mail", run: true, i: <Tile id="ma" a="#3a72ea" b="#59bdf8"><rect x="10" y="19" width="48" height="30" rx="3" fill="#f3f3f3" /><L c="#c4c4c4" w={1.5} d="M11 20L30 38Q34 42 38 38L57 20M11 48L27 35M57 48L41 35" /></Tile> },
  { n: "Photos", count: "1", i: <Tile id="ph" a="#fff" b="#fafafa">{petals.map((c, k) => <rect key={k} x="25" y="5" width="18" height="28" rx="9" fill={c} fillOpacity=".85" transform={`rotate(${k * 45} 34 34)`} />)}</Tile> },
  { n: "FaceTime", count: "1", i: <Tile id="ft" a="#84f07c" b="#52bf45"><rect x="10" y="19" width="32" height="30" rx="7" fill="#eaf7ea" /><F c="#eaf7ea" d="M45 32L57 22V47L45 37z" /></Tile> },
  { n: "Calendar", i: <Tile id="ca" a="#fff" b="#f1f1ef"><F c="#e4574e" d="M0 0H68V21H0z" /><text x="34" y="17" fontSize="14" fontWeight="600" textAnchor="middle" fill="#fff" fontFamily={UI}>OUT.</text><text x="34" y="57" fontSize="40" textAnchor="middle" fill="#2a2a2a" fontFamily={UI}>9</text></Tile> },
  { n: "Contacts", i: <Tile id="co" a="#b18d59" b="#946e3f"><L c="#7c5c34" w={2} d="M5 0V68" /><O x={35} y={33} r={20} c="#84643a" /><O x={35} y={29} r={7} c="#84643a" f="#84643a" /><path d="M20 46Q35 34 50 46Q35 60 20 46z" fill="#84643a" /></Tile> },
  { n: "Reminders", count: "1", i: <Tile id="re" a="#fff" b="#f1f1ef"><L c="#c6c6c6" d="M25 17H60M25 34H60M25 51H60" /><O x={13} y={17} r={5} c="#3478f6" w={1} /><O x={13} y={17} r={3} c="#3478f6" f="#3478f6" /><O x={13} y={34} r={5} c="#e2463d" w={1} /><O x={13} y={34} r={3} c="#e2463d" f="#e2463d" /><O x={13} y={51} r={5} c="#ee9432" w={1} /><O x={13} y={51} r={3} c="#ee9432" f="#ee9432" /></Tile> },
  { n: "Notes", run: true, i: <Tile id="no" a="#fafafa" b="#e6e4df"><F c="#f7cd46" d="M0 0H68V17H0z" /><L c="#d0d0cc" d="M0 19H68M0 34H68M0 50H68" /></Tile> },
  { n: "Freeform", i: <Tile id="fr" a="#fff" b="#fff"><circle cx="27" cy="41" r="19" fill="#ef7150" /><rect x="23" y="9" width="36" height="36" rx="3" fill="#58c6ef" fillOpacity=".9" /><L c="#123a5c" w={4} d="M13 44C18 28 24 22 27 26S22 42 27 40S34 22 38 26S34 42 42 38S46 42 60 30" /></Tile> },
  { n: "TV", run: true, i: <Tile id="tv" a="#2c3833" b="#0c1114"><g transform="translate(8 20)"><FaApple size={24} color="#fff" /></g><text x="45" y="44" fontSize="27" fontWeight="500" textAnchor="middle" fill="#fff" fontFamily={UI}>tv</text></Tile> },
  { n: "Safari", i: <Tile id="sa" a="#fff" b="#d8d8d8"><circle cx="34" cy="34" r="29" fill="#3c86e4" /><circle cx="34" cy="34" r="26" fill="none" stroke="#cfe6ff" strokeWidth="4" strokeDasharray="1 3" /><F c="#e4483e" d="M55 16L38 38L31 31z" /><F c="#f3f3f3" d="M14 52L31 31L38 38z" /></Tile> },
  { n: "App Store", i: <Tile id="as" a="#48adf0" b="#2a5cdb"><g stroke="#fff" strokeWidth="6" strokeLinecap="round"><path d="M30 15L54 51M38 15L22 42M13 41H36M47 41H55M18 48L16 51" /></g></Tile> },
  { n: "Music", run: true, i: <Tile id="mu" a="#ef5f70" b="#e83846"><F c="#fff" d="M22 15L50 10V45A7 6 0 1 1 45 40V22L27 25V50A7 6 0 1 1 22 45z" /></Tile> },
  { n: "Pages", i: <Tile id="pa" a="#fff" b="#fcfcfa"><L c="#f3d9b3" w={1.5} d="M32 14H68M32 22H68M0 30H68M0 38H68M0 46H68M0 54H68" /><text x="17" y="40" fontSize="44" fontWeight="700" textAnchor="middle" fill="#ef9a36" fontFamily="Liberation Serif, serif">“</text><L c="#f0a23c" w={5} d="M53 6L33 42" /><L c="#444" w={5} d="M33 42L27 53" /><F c="#bbb" d="M25 52L30 54L21 62z" /></Tile> },
  { n: "System Settings", i: <Tile id="ss" a="#d5dde4" b="#8e8e8e"><circle cx="34" cy="34" r="28" fill="none" stroke="#333" strokeWidth="5" strokeDasharray="2 1" /><circle cx="34" cy="34" r="22" fill="#555a5e" stroke="#2a2a2a" strokeWidth="3" /><circle cx="34" cy="34" r="13" fill="none" stroke="#a5a9ad" strokeWidth="4" /><L c="#b5b9bd" w={4} d="M34 34L55 34M34 34L24 15M34 34L24 53" /></Tile> },
  { n: "Spotify", run: true, i: <svg width="70" height="70" viewBox="0 0 70 70"><circle cx="35" cy="35" r="34" fill="#111" /><g><FaSpotify size={70} color="#66d46b" /></g></svg> },
  { n: "Chrome", run: true, i: <Tile id="ch" a="#fff" b="#fff"><ChromeMark /></Tile> },
  { n: "WhatsApp", run: true, i: <Tile id="wa" a="#7cf07a" b="#54c14b"><g transform="translate(5 4)"><FaWhatsapp size={58} color="#fff" /></g></Tile> },
];
const apps2: DockApp[] = [
  { n: "AutoCAD", run: true, i: <Tile id="ac" a="#fff" b="#fff"><F c="#e06a8a" d="M7 11L14 7V46L7 50z" /><F c="#6d1428" d="M12 15H60V61H12z" /><F c="#d12f52" d="M14 7H54V45H12V7z" /><text x="35" y="37" fontSize="29" fontWeight="800" textAnchor="middle" fill="#fff" fontFamily={UI}>A</text><text x="36" y="58" fontSize="12" fontWeight="700" textAnchor="middle" fill="#fff" fontFamily={UI}>CAD</text></Tile> },
  { n: "Sublime Text", run: true, i: <Tile id="su" a="#4c4c4c" b="#3e3e3e"><SublimeMark /></Tile> },
  { n: "WhatsApp Web", run: true, i: <Tile id="ww" a="#cfcfcf" b="#a5a5a5"><g transform="translate(5 5)"><FaWhatsapp size={58} color="#fff" /></g></Tile> },
  { n: "OpenVPN", run: true, i: <svg width="74" height="74" viewBox="0 0 74 74" aria-hidden="true"><circle cx="37" cy="37" r="36" fill="#fafafa" /><path d="M24 58A25 25 0 1 1 50 58L44 46A13 13 0 1 0 30 46z" fill="#e68a3e" /><circle cx="37" cy="37" r="8" fill="#233e6d" /><F c="#233e6d" d="M34 40H40L43 61H31z" /></svg> },
  { n: "QGIS", run: true, i: <svg width="78" height="77" viewBox="0 0 78 77" overflow="visible" aria-hidden="true"><QMark /></svg> },
];
const windows: DockApp[] = [
  { n: "QGIS window", i: <svg width="80" height="76" viewBox="0 0 80 76"><F c="#f7f7f5" d="M0 8H78V64H0z" /><L c="#c9c9c6" d="M0 12H78M0 17H50" /><F c="#6f9a4e" d="M17 30Q28 24 41 32V44Q28 48 17 44z" /><F c="#e37932" d="M18 42H26V46H18zM34 42H41V46H34z" /><L c="#b8b8b8" w={1} d="M42 18V62M15 18V62M4 22V40M45 22H70M45 28H60M45 34H52" /><At x={49} y={46} k={0.37}><QMark gap="#fff" /></At></svg> },
  { n: "Sublime window", i: <svg width="80" height="76" viewBox="0 0 80 76"><F c="#2e3742" d="M0 5H79V66H0z" /><F c="#d5d9dc" d="M0 5H79V8H0zM0 65H79V67H0z" /><L c="#606b78" w={1} d="M12 14H20M14 20H46M14 24H34M30 30H60M12 36H50M12 40H56M12 46H30M12 52H48M12 58H44" /><rect x="52" y="49" width="24" height="24" rx="5" fill="#454545" /><At x={52} y={49} k={0.36}><SublimeMark /></At></svg> },
  { n: "Chrome window", i: <svg width="76" height="80" viewBox="0 0 76 80"><F c="#fff" d="M0 0H76V80H0z" /><F c="#e5d3f5" d="M0 0H76V5H0z" /><F c="#eeeef2" d="M2 6H74V9H2z" /><F c="#a3456a" d="M2 11H14V13H2z" /><L c="#c79aab" w={1} d="M2 19H12M2 26H22M2 32H20M2 38H20M2 44H22M2 50H20M2 56H20M2 62H20M2 68H20M2 74H20" /><At x={51} y={54} k={0.36}><ChromeMark /></At></svg> },
  { n: "Trash", i: <svg width="66" height="80" viewBox="0 0 66 80"><F c="#d5d8d8" d="M3 12H63L55 72Q54 79 33 79T11 72z" /><F c="#e8eaea" d="M3 12H63L62 20H4z" /><F c="#555" d="M8 12L20 4L30 8L44 2L58 12L40 17L22 17z" /><F c="#f2f2f2" d="M12 9L22 1L30 12L20 15zM38 4L50 6L44 16z" /><F c="#4a90c8" d="M24 8L34 10L28 15z" /><L c="#c6caca" w={1} d="M14 24L20 72M26 22L28 74M40 22L38 74M54 24L48 72" /></svg> },
];

const layers = [
  { n: "0" }, { n: "cubo", frozen: true }, { n: "Defpoints" }, { n: "dodecaedro" }, { n: "icosaedro" }, { n: "octaedro", on: true }, { n: "tetraedro", frozen: true },
];

const Caret = ({ s = 12, c = W }: { s?: number; c?: string }) => (
  <svg width={s} height={s} viewBox="0 0 12 12" aria-hidden="true"><path d="M1 2H11L6 11z" fill={c} /></svg>
);
const Plus = ({ s = 22, c = "#c9cbcf" }: { s?: number; c?: string }) => (
  <svg width={s} height={s} viewBox="0 0 22 22" aria-hidden="true"><path d="M11 0V22M0 11H22" stroke={c} strokeWidth="2" /></svg>
);
const Chev = ({ flip }: { flip?: boolean }) => (
  <svg width="14" height="12" viewBox="0 0 14 12" aria-hidden="true">
    <path d={flip ? "M1 1L6 6L1 11M8 1L13 6L8 11" : "M6 1L1 6L6 11M13 1L8 6L13 11"} fill="none" stroke="#a3a5aa" strokeWidth="1.5" />
  </svg>
);
const Dart = () => <F d="M16 0L20 14V18L30 32L20 27L16 22L12 27L2 32L12 18V14z" />;

const status: { n: string; on?: boolean; i: React.ReactNode }[] = [
  { n: "Grid", i: <S><L d="M8 0V32M16 0V32M24 0V32M0 8H32M0 16H32M0 24H32" /></S> },
  { n: "Snap", i: <S>{[4, 14, 24].map((y) => [4, 12, 20, 28].map((x) => <Sq key={x + "-" + y} x={x} y={y + 2} s={4} c={W} />))}</S> },
  { n: "Ortho", i: <S><L d="M1 0V31H32M1 21H11V31" /></S> },
  { n: "Polar", i: <S><O x={14} y={17} r={12} /><L d="M14 18L28 3M14 18H32" /></S> },
  { n: "Dynamic input", i: <S><L d="M7 4V18M0 11H14" /><F d="M12 20H32V28H12z" /></S> },
  { n: "Lineweight", i: <S><F d="M0 3H32V5H14V7H0zM0 12H32V14H20V17H0zM0 22H32V24H18V29H0z" /></S> },
  { n: "Transparency", i: <S><L d="M3 3H29V29H3z" />{[0, 1, 2, 3, 4].map((r) => [0, 1, 2].map((q) => <Sq key={r + "_" + q} x={8 + q * 7 + (r % 2) * 3} y={8 + r * 4} s={3} c={W} />))}</S> },
  { n: "Selection cycling", i: <S><L d="M6 1H1V29H6M18 1H23V12" /><L c={G} d="M8 5H16V12H8z" /><O x={12} y={21} r={4} c={G} /><F c="#f2f2f2" d="M19 13V30L23 26L26 32L29 31L26 25H31z" /></S> },
  { n: "Angle", i: <S><L d="M32 29H1L24 3" /><Sq x={14} y={15} s={5} c={W} /></S> },
  { n: "Object snap", on: true, i: <S><L c="#fff" d="M2 2H10V10H2zM14 5H31V31H4V14" /></S> },
  { n: "Annotation visibility", on: true, i: <S><Dart /><circle cx="25" cy="8" r="6" fill="#fff" /></S> },
  { n: "Auto scale", i: <S><Dart /><Bolt x={19} y={0} k={0.9} /></S> },
];

const ToolCell = ({ t }: { t: Tool }) => (
  <Cell aria-label={t.n} $big={t.big} $menu={t.menu} $col={t.col}>{t.i}{t.badge && <Badge $big />}</Cell>
);

const DockItem = ({ a }: { a: DockApp }) => (
  <Launcher aria-label={a.n} $run={a.run}>{a.i}{a.count && <Count>{a.count}</Count>}</Launcher>
);

export default function App() {
  return (
    <Desktop>
      <Global />
      <MenuBar>
        <Menus>
          <AppleItem aria-label="Apple menu"><FaApple size={32} /></AppleItem>
          <MenuItem $bold>AutoCAD 2023</MenuItem>
          {["File", "Edit", "View", "Insert", "Format", "Tools", "Draw", "Dimension", "Modify", "Window", "Help"].map((m) => <MenuItem key={m}>{m}</MenuItem>)}
        </Menus>
        <Extras>
          <Extra aria-label="VPN"><S><L c="#e6f4f7" d="M10 30A15 15 0 1 1 22 30L20 22A7 7 0 1 0 12 22z" w={2.5} /></S></Extra>
          <Extra aria-label="Autodesk"><S><path d="M3 31V14A13 13 0 0 1 29 14V31H20V25H12V31z" fill="#6dbccf" /><path d="M12 22V15A4 4 0 0 1 20 15V22z" fill="#0b90b0" /></S></Extra>
          <Extra aria-label="Playing"><S><O x={16} y={16} r={13} c="#f0fafc" w={2.5} /><F c="#fff" d="M12 10L22 16L12 22z" /></S></Extra>
          <Extra aria-label="Bluetooth" $w={64}><FaBluetoothB size={28} /></Extra>
          <Extra aria-label="Battery" $w={78}>
            <svg width="52" height="26" viewBox="0 0 52 26"><rect x="1" y="1" width="44" height="24" rx="7" fill="none" stroke="#8ccbd9" strokeWidth="2" /><rect x="4" y="4" width="38" height="18" rx="4" fill="#fff" /><path d="M26 1L14 14H22L20 25L33 11H25z" fill="#fff" stroke="#0b90b0" strokeWidth="2" /><path d="M48 9Q52 13 48 17z" fill="#8ccbd9" /></svg>
          </Extra>
          <Extra aria-label="Spotlight"><S><O x={13} y={13} r={9} c="#fff" w={3} /><L c="#fff" d="M20 20L28 28" w={3} /></S></Extra>
          <Extra aria-label="Wi-Fi"><FaWifi size={32} /></Extra>
          <Extra aria-label="Control Center"><S><rect x="3" y="3" width="26" height="11" rx="5.500" fill="none" stroke="#fff" strokeWidth="2.5" /><circle cx="9" cy="8" r="3" fill="#fff" /><rect x="2" y="17" width="28" height="13" rx="6.500" fill="#fff" /><circle cx="23" cy="23.500" r="4" fill="#0b90b0" /></S></Extra>
          <Extra aria-label="Siri" $w={60}><Siri /></Extra>
          <Clock><span>qui. 9/10</span><span>12:48</span></Clock>
        </Extras>
      </MenuBar>

      <Win>
        <Head>
          <TitleRow>
            <Lights>
              <Light $c="#ec6a5e" $on aria-label="Close" /><Light $c="#f4bf4f" aria-label="Minimize" /><Light $c="#61c554" aria-label="Zoom window" />
            </Lights>
            <WinTitle>
              <S><F c="#3e5680" d="M2 0H20L29 9V32H2z" /><F c="#94824f" d="M2 18H14L29 28V32H2z" /><F c="#6f7e99" d="M21 0L29 8H21z" /><L c="#9aa9c0" w={1.5} d="M9 0V18M2 11H29M6 8H12V14H6z" /></S>
              Autodesk AutoCAD 2023 <span>solidos.dwg</span>
            </WinTitle>
            <Right>
              <User>
                <svg width="24" height="28" viewBox="0 0 26 28" fill="none" stroke={W} strokeWidth="2" aria-hidden="true"><circle cx="13" cy="7" r="5.500" /><path d="M2 27C2 11 24 11 24 27" /></svg>
                Luisa Lancastre
                <Caret s={11} />
              </User>
            </Right>
          </TitleRow>
          <ToolBar>
            {tools.map((g, k) => (
              <Group key={k}>{g.map((t) => <ToolBtn key={t.n} aria-label={t.n}>{t.i}{t.badge && <Badge />}</ToolBtn>)}</Group>
            ))}
          </ToolBar>
        </Head>

        <Body>
          <Side>
            <SideTabs>
              <SideTab $on>Drafting</SideTab><SideTab>Modeling</SideTab><Fold aria-label="Collapse tools"><Chev /></Fold>
            </SideTabs>
            {sections.map((s) => (
              <Section key={s.t}>
                <SecHead>
                  <svg width="17" height="9" viewBox="0 0 17 9" aria-hidden="true"><path d="M0 0H17L8.500 9z" fill="#f4f4f4" /></svg>
                  {s.t}<FaCog size={20} color="#f4f4f4" />
                </SecHead>
                {s.rows.map((r, q) => <Tools key={q}>{r.map((t) => <ToolCell key={t.n} t={t} />)}</Tools>)}
              </Section>
            ))}
            <SideFoot>
              <button aria-label="Add tool group"><Plus /></button>
              <button aria-label="Manage groups"><svg width="28" height="22" viewBox="0 0 28 22"><path d="M6 2H27M6 8H27M6 20H27" stroke={W} strokeWidth="2" /><path d="M1 12H19V16H1zM20 16L23 11L26 16z" fill={W} /></svg></button>
            </SideFoot>
          </Side>

          <Main>
            <Work>
              <Center>
                <DocTabs>
                  <DocIcon aria-label="Start tab"><svg width="28" height="28" viewBox="0 0 28 28"><path d="M0 0H13V13H0z" fill={SKY} /><path d="M15 1H27V13H15zM1 16H13V28H1zM15 16H27V28H15z" fill={W} /></svg></DocIcon>
                  <DocIcon aria-label="New drawing"><Plus s={24} /></DocIcon>
                  <DocTab>rd_2</DocTab><DocTab $on>solidos*</DocTab><DocTab>figuras_geo.bak</DocTab>
                </DocTabs>
                <Canvas>
                  <Scene viewBox="370 208 1838 1424" preserveAspectRatio="xMidYMid slice" aria-hidden="true">
                    <g fill="none" stroke="#d4d6d8" strokeWidth="1.2">
                      <path d="M1259 689L1249 1010L1508 926z" fill="#646767" />
                      <ellipse cx="1009" cy="920" rx="354" ry="332" transform="rotate(5 1009 920)" /><ellipse cx="1509" cy="927" rx="354" ry="332" transform="rotate(5 1509 927)" />
                      <path d="M1008 588V830M1008 918L1269 837L1508 926M1008 918L1249 1010" />
                    </g>
                    <g strokeLinecap="round">
                      <path d="M1008 834V916" stroke="#5b7fc6" strokeWidth="9" /><path d="M1012 919L1076 899" stroke="#55924c" strokeWidth="9" /><path d="M1010 921L1070 943" stroke="#cf6760" strokeWidth="9" />
                    </g>
                    <g strokeWidth="1.5" fill="none">
                      <path d="M1007 799H1027L1007 820H1027" stroke="#3552b5" /><path d="M1076 866L1086 877L1097 866M1086 877V888" stroke="#3b7a3b" /><path d="M1071 916L1092 936M1092 916L1071 936" stroke="#a32f2c" />
                    </g>
                    <g strokeWidth="1.5" fill="none">
                      <path d="M1849 1000V1150" stroke="#6165b8" /><path d="M1813 1111L1928 1077" stroke="#6fae6b" /><path d="M1815 1088L1921 1125" stroke="#b5665c" /><rect x="1843" y="1094" width="12" height="12" stroke="#d9d9d9" fill="#222830" />
                    </g>
                  </Scene>
                  <Cube viewBox="1900 290 290 210" aria-hidden="true">
                    <defs>
                      <linearGradient id="cl"><stop stopColor="#a2a3a5" /><stop offset="1" stopColor="#b2b3b5" /></linearGradient>
                      <linearGradient id="cr" x2="0" y2="1"><stop stopColor="#a6a7a9" /><stop offset="1" stopColor="#8f9092" /></linearGradient>
                      <radialGradient id="sh"><stop offset=".5" stopColor="#15181c" /><stop offset="1" stopColor="#222830" /></radialGradient>
                    </defs>
                    <ellipse cx="2046" cy="431" rx="118" ry="46" fill="none" stroke="#4b4f55" strokeWidth="27" />
                    <ellipse cx="2046" cy="428" rx="102" ry="38" fill="url(#sh)" />
                    <g fill="#aaacae" fontFamily={HELV} fontWeight="700" fontSize="32" textAnchor="middle">
                      <text transform="translate(1966 402) rotate(35) skewX(-15)" fontSize="24">W</text><text transform="translate(2131 400) rotate(-30) skewX(15)" fontSize="24">N</text>
                      <text transform="translate(1944 472) rotate(20) skewX(-10)">S</text><text transform="translate(2140 475) rotate(-45) skewX(-25)">E</text>
                    </g>
                    <path d="M1977 326L2044 348V445L1981 415z" fill="url(#cl)" /><path d="M2044 348L2116 327L2112 416L2044 445z" fill="url(#cr)" /><path d="M2048 308L2116 327L2044 348L1977 326z" fill="#b1b2b4" />
                    <path d="M1977 326L2044 348L2116 327M2044 348V445" fill="none" stroke="#6f7173" strokeWidth="1.5" strokeDasharray="3 1" />
                    <path d="M2030 343L2044 339L2058 343V362L2044 366L2030 361z" fill="#8f969e" fillOpacity=".6" />
                    <g fill="#4c4f53" fontFamily={HELV} fontWeight="700" textAnchor="middle">
                      <text transform="matrix(.56 .2 0 1 2011 393)" fontSize="25">FRONT</text><text transform="matrix(.6 -.2 0 1 2080 393)" fontSize="25">RIGHT</text>
                      <text transform="matrix(.8 .25 -.8 .45 2046 330)" fontSize="17">TOP</text>
                    </g>
                  </Cube>
                  <ViewBar><button>+</button><button>Custom View</button><button>X-Ray</button></ViewBar>
                  <Wcs>WCS <svg width="18" height="14" viewBox="0 0 18 14" aria-hidden="true"><path d="M1 1H17L9 12z" fill="#9fb0b8" stroke="#222830" strokeWidth="1.5" /></svg></Wcs>
                  <Command>
                    <History>
                      <svg width="8" height="3" viewBox="0 0 8 3" aria-hidden="true"><path d="M0 0Q4 4 8 0" fill="none" stroke="#b9bcc2" strokeWidth="2" /></svg>
                      <p>Command: UCS</p><p>Current ucs name:  *NO NAME*</p><p>Specify origin of UCS or [Face/NAmed/OBject/Previous/View/World/X/Y/Z/ZAxis] &lt;World&gt;:</p>
                      <Thumb />
                    </History>
                    <Prompt>
                      <svg width="46" height="24" viewBox="0 0 46 24" aria-hidden="true"><path d="M2 2L10 8L2 14" fill="none" stroke="#b9bcc2" strokeWidth="2.5" /><path d="M16 19H29" stroke="#b9bcc2" strokeWidth="3" /><path d="M33 7H45L39 15z" fill="#b9bcc2" /></svg>
                      <CmdInput placeholder="Type a command" aria-label="Command" />
                      <Caret c="#9a9ea7" />
                      <svg width="26" height="28" viewBox="0 0 26 28" aria-hidden="true"><path d="M9 9H1V27H25V9H18M9 9V27" fill="none" stroke={W} strokeWidth="2" /><path d="M14 18V5" stroke={B} strokeWidth="2" /><path d="M9 6L14 0L19 6z" fill={B} /></svg>
                    </Prompt>
                  </Command>
                </Canvas>
              </Center>

              <Layers>
                <LTabs>
                  <button aria-label="Layers palette"><S><Stack /><circle cx="26" cy="23" r="9" fill={W} stroke={PANEL} strokeWidth="2" /><F c={PANEL} d="M25 17h3v3h-3zM24 21h4v7h-4z" /></S></button>
                  <div />
                  <button aria-label="Collapse palette"><Chev flip /></button>
                </LTabs>
                <LHead>
                  <h2>Layers</h2>
                  {layerTools.map((t) => <ToolBtn $w={48} key={t.n} aria-label={t.n}>{t.i}</ToolBtn>)}
                  <button aria-label="Undock"><svg width="22" height="30" viewBox="0 0 22 30"><path d="M8 8V2H21V28H8V22M2 15H13" fill="none" stroke={W} strokeWidth="2" /><path d="M0 15L6 10V20z" fill={W} /></svg></button>
                </LHead>
                <Pick>
                  <PickMarks><Dot /><Padlock c="#6f7888" hole={FIELD} /><Snow s={20} c="#6f7888" /><Swatch /></PickMarks>
                  <select aria-label="Current layer" defaultValue="octaedro">{layers.map((l) => <option key={l.n}>{l.n}</option>)}</select>
                  <Caret />
                </Pick>
                <Pick><select aria-label="Layer state"><option>Unsaved Layer State</option></select><Caret /></Pick>
                <Hide><svg width="16" height="10" viewBox="0 0 16 10" aria-hidden="true"><path d="M1 1L8 8L15 1" fill="none" stroke={W} strokeWidth="2" /></svg>Hide Layer List</Hide>
                <Box>
                  <LTable>
                    <colgroup><Col $w={63} /><col /><Col $w={43} /><Col $w={44} /><Col $w={94} /><Col $w={94} /><Col $w={55} /></colgroup>
                    <thead>
                      <tr>
                        <th aria-label="Visible"><svg width="24" height="16" viewBox="0 0 24 16"><path fillRule="evenodd" d="M0 8Q12 -8 24 8Q12 24 0 8zM12 3.500a4.500 4.500 0 1 0 .1 0z" fill={W} /><circle cx="12" cy="8" r="2.500" fill={W} /></svg></th>
                        <NameHead>
                          <div><svg width="18" height="18" viewBox="0 0 18 18"><path d="M1 1H17V17H1z" fill="none" stroke={W} strokeWidth="2" /><path d="M1 17V1H15z" fill={W} /></svg>Name<svg width="10" height="18" viewBox="0 0 10 18"><path d="M5 0L10 7H0zM5 18L0 11H10z" fill={W} /></svg></div>
                          <svg width="14" height="10" viewBox="0 0 14 10"><path d="M7 0L14 10H0z" fill="#3f95f3" /></svg>
                        </NameHead>
                        <th aria-label="Freeze"><Snow /></th>
                        <th aria-label="Lock"><Padlock /></th>
                        <th aria-label="Lineweight"><svg width="19" height="16" viewBox="0 0 19 16"><path d="M0 0H19V2H0zM0 6H19V9H0zM0 12H19V16H0z" fill={W} /></svg></th>
                        <th aria-label="Linetype"><svg width="20" height="16" viewBox="0 0 20 16"><path d="M0 1H20" stroke={W} strokeWidth="2" strokeDasharray="2 1.6" /><path d="M0 8H20" stroke={W} strokeWidth="2" strokeDasharray="5 2" /><path d="M0 15H20" stroke={W} strokeWidth="2" /></svg></th>
                        <th aria-label="Viewport"><svg width="22" height="18" viewBox="0 0 22 18"><path d="M14 3V1H1V15H6M6 3H21V17H6zM10 7H17V13H10z" fill="none" stroke={W} strokeWidth="2" /></svg></th>
                      </tr>
                    </thead>
                    <tbody>
                      {layers.map((l) => (
                        <Row key={l.n} $on={l.on}>
                          <VisCell><Dot /></VisCell>
                          <NameCell><Swatch /><span>{l.n}</span></NameCell>
                          <td>{l.frozen && <Snow />}</td>
                          <td />
                          <WeightCell>De...</WeightCell>
                          <td><Rule /></td>
                          <td />
                        </Row>
                      ))}
                    </tbody>
                  </LTable>
                </Box>
                <LFoot>
                  <button aria-label="New layer"><S><L d="M10 6H26L18 15H4zM26 12L18 20H4M26 17L18 26H4" /></S></button>
                  <button aria-label="Layer states"><S><L d="M10 2H22L16 10H4zM22 8L16 15H4M8 20H12" /><rect x="12" y="15" width="18" height="15" fill={PANEL} stroke={W} strokeWidth="2" /><Lines x={16} y={21} c={W} /></S></button>
                  <button aria-label="New group"><S><F d="M3 5H10L14 9H20V12H10L5 26H3z" /><F d="M11 14H29L24 26H6z" /></S></button>
                  <button aria-label="New filter"><S><F d="M3 5H10L14 9H20V12H10L5 26H3z" /><F d="M11 14H29L24 26H6z" /><F c={PANEL} d="M18 15L12 21H16L14 26L22 19H17z" /></S></button>
                  <button aria-label="Remove"><svg width="16" height="4"><rect width="16" height="4" fill="#8a8f99" /></svg></button>
                  <button aria-label="Columns"><svg width="36" height="18" viewBox="0 0 36 18"><path d="M1 1H21V17H1zM7 1V17M14 1V17" fill="none" stroke={W} strokeWidth="2" /><path d="M26 6H36L31 13z" fill={W} /></svg></button>
                </LFoot>
                <Search>
                  <svg width="36" height="26" viewBox="0 0 36 26" fill="none" stroke="#222" strokeWidth="2.5" aria-hidden="true"><circle cx="11" cy="10" r="8.500" /><path d="M17 16L24 24M25 9L30 14L35 9" /></svg>
                  <input placeholder="Search for layer" aria-label="Search for layer" />
                </Search>
              </Layers>
            </Work>

            <Status>
              <ModelTab $on $w={119}>Model</ModelTab><AddTab aria-label="Add layout"><Plus /></AddTab><ModelTab $w={118}>a3rd</ModelTab>
              <Coords>2.680,  0.755 , 0.000</Coords>
              {status.map((s) => <StatBtn key={s.n} aria-label={s.n} $on={s.on}>{s.i}</StatBtn>)}
              <StatBtn $w={95}><S><Dart /></S>1:1<Caret /></StatBtn>
              <StatBtn aria-label="Isolate objects"><S><L d="M2 1H14V13H2zM13 20L20 31H7z" /><O x={26} y={13} r={6} /></S></StatBtn>
              <StatBtn aria-label="Settings" $w={42}><FaCog size={32} color={W} /></StatBtn>
            </Status>
          </Main>
        </Body>
      </Win>

      <Dock>
        {apps.map((a) => <DockItem key={a.n} a={a} />)}
        <Gap />
        {apps2.map((a) => <DockItem key={a.n} a={a} />)}
        <Gap />
        {windows.map((a) => <DockItem key={a.n} a={a} />)}
      </Dock>
    </Desktop>
  );
}
